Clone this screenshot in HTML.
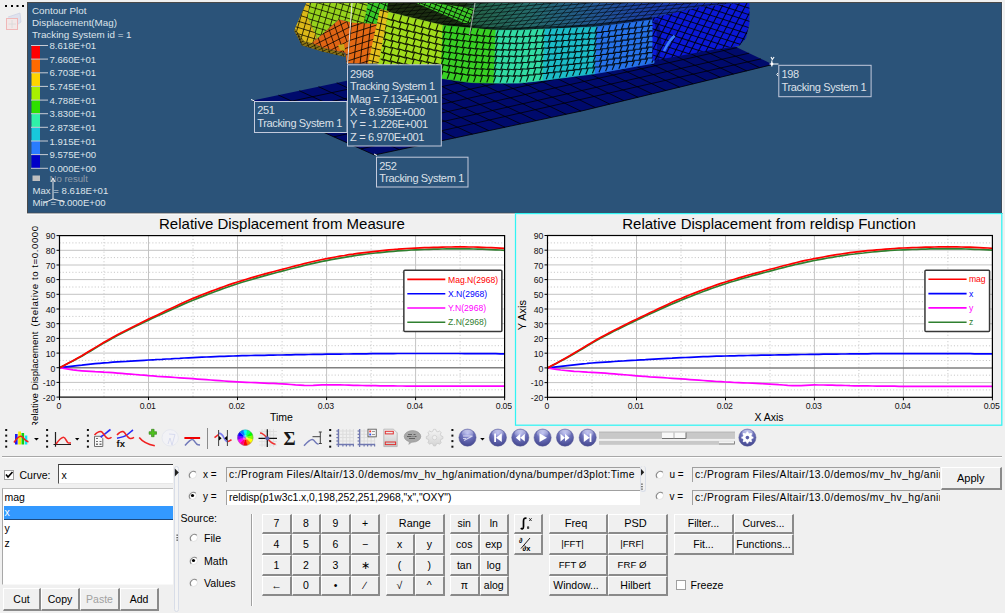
<!DOCTYPE html>
<html><head><meta charset="utf-8"><style>
html,body{margin:0;padding:0}
body{width:1005px;height:613px;position:relative;overflow:hidden;background:#f0f0f0;font-family:'Liberation Sans',sans-serif;}
</style></head><body>
<svg style="position:absolute;left:0;top:0" width="30" height="30"><g fill="#000"><rect x="5" y="5" width="2" height="2"/><rect x="11" y="5" width="2" height="2"/><rect x="16.5" y="5" width="2" height="2"/><rect x="22" y="5" width="2" height="2"/></g>
<path d="M8,17 L20,13 L21,22 L14,27" fill="#dfe2ee" stroke="#c8cce0" stroke-width="0.6"/><rect x="6.5" y="18.5" width="11" height="11" fill="#f2e8e8" stroke="#f0b8b8" stroke-width="1"/><path d="M8.5,24 H16 M12,20 V28" stroke="#d8d8d8" stroke-width="0.8"/></svg>
<div style="position:absolute;left:27px;top:2px;width:975px;height:211px;background:#2b5379;box-shadow:inset 1px 1px 0 #4a4a4a, inset -1px 0 0 #3a4a5a, inset 0 -1px 0 #34506c;overflow:hidden"></div><div style="position:absolute;left:27px;top:213px;width:976px;height:1px;background:#b4b4b4"></div><div style="position:absolute;left:27px;top:214px;width:976px;height:1px;background:#f8f8f8"></div><div style="position:absolute;left:1002px;top:2px;width:1px;height:211px;background:#f8f8f8"></div>
<svg style="position:absolute;left:0;top:0" width="1005" height="213" viewBox="0 0 1005 213">
<defs><clipPath id="vpc"><rect x="28" y="3" width="973" height="210"/></clipPath></defs>
<g clip-path="url(#vpc)">
<polygon points="252.5,100.5 374.4,155.0 582.0,110.9 772.8,64.5 666.0,13.7" fill="#000a6c"/>
<g stroke="#000" stroke-width="0.9" stroke-opacity="0.85">
<line x1="266.0" y1="106.6" x2="677.9" y2="19.3"/>
<line x1="279.6" y1="112.6" x2="689.7" y2="25.0"/>
<line x1="293.1" y1="118.7" x2="701.6" y2="30.6"/>
<line x1="306.7" y1="124.7" x2="713.5" y2="36.3"/>
<line x1="320.2" y1="130.8" x2="725.3" y2="41.9"/>
<line x1="333.8" y1="136.8" x2="737.2" y2="47.6"/>
<line x1="347.3" y1="142.9" x2="749.1" y2="53.2"/>
<line x1="360.9" y1="148.9" x2="760.9" y2="58.9"/>
<line x1="399.4" y1="149.7" x2="278.4" y2="95.1"/>
<line x1="419.4" y1="145.4" x2="299.2" y2="90.7"/>
<line x1="438.0" y1="141.5" x2="318.5" y2="86.7"/>
<line x1="455.6" y1="137.8" x2="336.7" y2="82.8"/>
<line x1="472.5" y1="134.2" x2="354.3" y2="79.1"/>
<line x1="489.0" y1="130.7" x2="371.4" y2="75.5"/>
<line x1="505.0" y1="127.3" x2="388.0" y2="72.0"/>
<line x1="520.7" y1="123.9" x2="404.3" y2="68.6"/>
<line x1="536.1" y1="120.7" x2="420.3" y2="65.3"/>
<line x1="551.2" y1="117.4" x2="436.0" y2="62.0"/>
<line x1="566.2" y1="114.3" x2="451.5" y2="58.7"/>
<line x1="580.9" y1="111.1" x2="466.8" y2="55.5"/>
<line x1="595.4" y1="107.6" x2="481.9" y2="52.3"/>
<line x1="609.8" y1="104.1" x2="496.8" y2="49.2"/>
<line x1="624.0" y1="100.7" x2="511.6" y2="46.1"/>
<line x1="638.1" y1="97.3" x2="526.2" y2="43.0"/>
<line x1="652.0" y1="93.9" x2="540.7" y2="40.0"/>
<line x1="665.9" y1="90.5" x2="555.0" y2="37.0"/>
<line x1="679.6" y1="87.2" x2="569.2" y2="34.0"/>
<line x1="693.2" y1="83.9" x2="583.3" y2="31.1"/>
<line x1="706.7" y1="80.6" x2="597.4" y2="28.1"/>
<line x1="720.1" y1="77.3" x2="611.3" y2="25.2"/>
<line x1="733.4" y1="74.1" x2="625.1" y2="22.3"/>
<line x1="746.6" y1="70.9" x2="638.8" y2="19.4"/>
<line x1="759.7" y1="67.7" x2="652.4" y2="16.5"/>
</g>
<polyline points="252.5,100.5 374.4,155.0 582.0,110.9 772.8,64.5" fill="none" stroke="#000" stroke-width="0.8"/>
<linearGradient id="tg" x1="385" x2="749" y1="0" y2="0" gradientUnits="userSpaceOnUse"><stop offset="0" stop-color="#1c2a0e"/><stop offset="0.22" stop-color="#1a3014"/><stop offset="0.25" stop-color="#246248"/><stop offset="0.4" stop-color="#256a6a"/><stop offset="0.6" stop-color="#215294"/><stop offset="0.74" stop-color="#1a3ca4"/><stop offset="1" stop-color="#0a20b4"/></linearGradient>
<polygon points="385.0,2.0 749.4,2.0 747.0,2.4 700.0,7.0 653.0,18.0 652.0,19.5 596.0,27.0 520.0,30.3 494.0,30.3 443.0,25.5 385.0,11.0" fill="url(#tg)"/>
<clipPath id="mc1"><polygon points="385.0,2.0 749.4,2.0 747.0,2.4 700.0,7.0 653.0,18.0 652.0,19.5 596.0,27.0 520.0,30.3 494.0,30.3 443.0,25.5 385.0,11.0"/></clipPath>
<g clip-path="url(#mc1)" stroke="#000" stroke-opacity="0.62" stroke-width="0.95">
<line x1="166.0" y1="-314.5" x2="890.8" y2="-390.7"/>
<line x1="166.4" y1="-310.9" x2="891.2" y2="-387.1"/>
<line x1="166.8" y1="-307.4" x2="891.6" y2="-383.5"/>
<line x1="167.2" y1="-303.8" x2="892.0" y2="-380.0"/>
<line x1="167.5" y1="-300.2" x2="892.3" y2="-376.4"/>
<line x1="167.9" y1="-296.6" x2="892.7" y2="-372.8"/>
<line x1="168.3" y1="-293.0" x2="893.1" y2="-369.2"/>
<line x1="168.7" y1="-289.5" x2="893.5" y2="-365.6"/>
<line x1="169.0" y1="-285.9" x2="893.9" y2="-362.1"/>
<line x1="169.4" y1="-282.3" x2="894.2" y2="-358.5"/>
<line x1="169.8" y1="-278.7" x2="894.6" y2="-354.9"/>
<line x1="170.2" y1="-275.1" x2="895.0" y2="-351.3"/>
<line x1="170.6" y1="-271.6" x2="895.4" y2="-347.7"/>
<line x1="170.9" y1="-268.0" x2="895.7" y2="-344.2"/>
<line x1="171.3" y1="-264.4" x2="896.1" y2="-340.6"/>
<line x1="171.7" y1="-260.8" x2="896.5" y2="-337.0"/>
<line x1="172.1" y1="-257.2" x2="896.9" y2="-333.4"/>
<line x1="172.4" y1="-253.7" x2="897.2" y2="-329.8"/>
<line x1="172.8" y1="-250.1" x2="897.6" y2="-326.3"/>
<line x1="173.2" y1="-246.5" x2="898.0" y2="-322.7"/>
<line x1="173.6" y1="-242.9" x2="898.4" y2="-319.1"/>
<line x1="173.9" y1="-239.3" x2="898.7" y2="-315.5"/>
<line x1="174.3" y1="-235.8" x2="899.1" y2="-311.9"/>
<line x1="174.7" y1="-232.2" x2="899.5" y2="-308.4"/>
<line x1="175.1" y1="-228.6" x2="899.9" y2="-304.8"/>
<line x1="175.4" y1="-225.0" x2="900.3" y2="-301.2"/>
<line x1="175.8" y1="-221.4" x2="900.6" y2="-297.6"/>
<line x1="176.2" y1="-217.9" x2="901.0" y2="-294.0"/>
<line x1="176.6" y1="-214.3" x2="901.4" y2="-290.5"/>
<line x1="176.9" y1="-210.7" x2="901.8" y2="-286.9"/>
<line x1="177.3" y1="-207.1" x2="902.1" y2="-283.3"/>
<line x1="177.7" y1="-203.5" x2="902.5" y2="-279.7"/>
<line x1="178.1" y1="-200.0" x2="902.9" y2="-276.1"/>
<line x1="178.5" y1="-196.4" x2="903.3" y2="-272.6"/>
<line x1="178.8" y1="-192.8" x2="903.6" y2="-269.0"/>
<line x1="179.2" y1="-189.2" x2="904.0" y2="-265.4"/>
<line x1="179.6" y1="-185.6" x2="904.4" y2="-261.8"/>
<line x1="180.0" y1="-182.1" x2="904.8" y2="-258.2"/>
<line x1="180.3" y1="-178.5" x2="905.1" y2="-254.7"/>
<line x1="180.7" y1="-174.9" x2="905.5" y2="-251.1"/>
<line x1="181.1" y1="-171.3" x2="905.9" y2="-247.5"/>
<line x1="181.5" y1="-167.7" x2="906.3" y2="-243.9"/>
<line x1="181.8" y1="-164.2" x2="906.6" y2="-240.3"/>
<line x1="182.2" y1="-160.6" x2="907.0" y2="-236.8"/>
<line x1="182.6" y1="-157.0" x2="907.4" y2="-233.2"/>
<line x1="183.0" y1="-153.4" x2="907.8" y2="-229.6"/>
<line x1="183.3" y1="-149.8" x2="908.2" y2="-226.0"/>
<line x1="183.7" y1="-146.3" x2="908.5" y2="-222.4"/>
<line x1="184.1" y1="-142.7" x2="908.9" y2="-218.9"/>
<line x1="184.5" y1="-139.1" x2="909.3" y2="-215.3"/>
<line x1="184.9" y1="-135.5" x2="909.7" y2="-211.7"/>
<line x1="185.2" y1="-131.9" x2="910.0" y2="-208.1"/>
<line x1="185.6" y1="-128.4" x2="910.4" y2="-204.5"/>
<line x1="186.0" y1="-124.8" x2="910.8" y2="-201.0"/>
<line x1="186.4" y1="-121.2" x2="911.2" y2="-197.4"/>
<line x1="186.7" y1="-117.6" x2="911.5" y2="-193.8"/>
<line x1="187.1" y1="-114.0" x2="911.9" y2="-190.2"/>
<line x1="187.5" y1="-110.5" x2="912.3" y2="-186.6"/>
<line x1="187.9" y1="-106.9" x2="912.7" y2="-183.1"/>
<line x1="188.2" y1="-103.3" x2="913.0" y2="-179.5"/>
<line x1="188.6" y1="-99.7" x2="913.4" y2="-175.9"/>
<line x1="189.0" y1="-96.1" x2="913.8" y2="-172.3"/>
<line x1="189.4" y1="-92.6" x2="914.2" y2="-168.7"/>
<line x1="189.7" y1="-89.0" x2="914.6" y2="-165.2"/>
<line x1="190.1" y1="-85.4" x2="914.9" y2="-161.6"/>
<line x1="190.5" y1="-81.8" x2="915.3" y2="-158.0"/>
<line x1="190.9" y1="-78.2" x2="915.7" y2="-154.4"/>
<line x1="191.2" y1="-74.6" x2="916.1" y2="-150.8"/>
<line x1="191.6" y1="-71.1" x2="916.4" y2="-147.2"/>
<line x1="192.0" y1="-67.5" x2="916.8" y2="-143.7"/>
<line x1="192.4" y1="-63.9" x2="917.2" y2="-140.1"/>
<line x1="192.8" y1="-60.3" x2="917.6" y2="-136.5"/>
<line x1="193.1" y1="-56.7" x2="917.9" y2="-132.9"/>
<line x1="193.5" y1="-53.2" x2="918.3" y2="-129.3"/>
<line x1="193.9" y1="-49.6" x2="918.7" y2="-125.8"/>
<line x1="194.3" y1="-46.0" x2="919.1" y2="-122.2"/>
<line x1="194.6" y1="-42.4" x2="919.4" y2="-118.6"/>
<line x1="195.0" y1="-38.8" x2="919.8" y2="-115.0"/>
<line x1="195.4" y1="-35.3" x2="920.2" y2="-111.4"/>
<line x1="195.8" y1="-31.7" x2="920.6" y2="-107.9"/>
<line x1="196.1" y1="-28.1" x2="920.9" y2="-104.3"/>
<line x1="196.5" y1="-24.5" x2="921.3" y2="-100.7"/>
<line x1="196.9" y1="-20.9" x2="921.7" y2="-97.1"/>
<line x1="197.3" y1="-17.4" x2="922.1" y2="-93.5"/>
<line x1="197.6" y1="-13.8" x2="922.5" y2="-90.0"/>
<line x1="198.0" y1="-10.2" x2="922.8" y2="-86.4"/>
<line x1="198.4" y1="-6.6" x2="923.2" y2="-82.8"/>
<line x1="198.8" y1="-3.0" x2="923.6" y2="-79.2"/>
<line x1="199.2" y1="0.5" x2="924.0" y2="-75.6"/>
<line x1="199.5" y1="4.1" x2="924.3" y2="-72.1"/>
<line x1="199.9" y1="7.7" x2="924.7" y2="-68.5"/>
<line x1="200.3" y1="11.3" x2="925.1" y2="-64.9"/>
<line x1="200.7" y1="14.9" x2="925.5" y2="-61.3"/>
<line x1="201.0" y1="18.4" x2="925.8" y2="-57.7"/>
<line x1="201.4" y1="22.0" x2="926.2" y2="-54.2"/>
<line x1="201.8" y1="25.6" x2="926.6" y2="-50.6"/>
<line x1="202.2" y1="29.2" x2="927.0" y2="-47.0"/>
<line x1="202.5" y1="32.8" x2="927.3" y2="-43.4"/>
<line x1="202.9" y1="36.3" x2="927.7" y2="-39.8"/>
<line x1="203.3" y1="39.9" x2="928.1" y2="-36.3"/>
<line x1="203.7" y1="43.5" x2="928.5" y2="-32.7"/>
<line x1="204.0" y1="47.1" x2="928.9" y2="-29.1"/>
<line x1="204.4" y1="50.7" x2="929.2" y2="-25.5"/>
<line x1="204.8" y1="54.2" x2="929.6" y2="-21.9"/>
<line x1="205.2" y1="57.8" x2="930.0" y2="-18.4"/>
<line x1="205.5" y1="61.4" x2="930.4" y2="-14.8"/>
<line x1="205.9" y1="65.0" x2="930.7" y2="-11.2"/>
<line x1="206.3" y1="68.6" x2="931.1" y2="-7.6"/>
<line x1="206.7" y1="72.1" x2="931.5" y2="-4.0"/>
<line x1="207.1" y1="75.7" x2="931.9" y2="-0.5"/>
<line x1="207.4" y1="79.3" x2="932.2" y2="3.1"/>
<line x1="207.8" y1="82.9" x2="932.6" y2="6.7"/>
<line x1="208.2" y1="86.5" x2="933.0" y2="10.3"/>
<line x1="208.6" y1="90.0" x2="933.4" y2="13.9"/>
<line x1="208.9" y1="93.6" x2="933.7" y2="17.4"/>
<line x1="209.3" y1="97.2" x2="934.1" y2="21.0"/>
<line x1="209.7" y1="100.8" x2="934.5" y2="24.6"/>
<line x1="210.1" y1="104.4" x2="934.9" y2="28.2"/>
<line x1="210.4" y1="107.9" x2="935.2" y2="31.8"/>
<line x1="210.8" y1="111.5" x2="935.6" y2="35.3"/>
<line x1="211.2" y1="115.1" x2="936.0" y2="38.9"/>
<line x1="211.6" y1="118.7" x2="936.4" y2="42.5"/>
<line x1="211.9" y1="122.3" x2="936.8" y2="46.1"/>
<line x1="212.3" y1="125.8" x2="937.1" y2="49.7"/>
<line x1="212.7" y1="129.4" x2="937.5" y2="53.2"/>
<line x1="213.1" y1="133.0" x2="937.9" y2="56.8"/>
<line x1="213.5" y1="136.6" x2="938.3" y2="60.4"/>
<line x1="213.8" y1="140.2" x2="938.6" y2="64.0"/>
<line x1="214.2" y1="143.7" x2="939.0" y2="67.6"/>
<line x1="214.6" y1="147.3" x2="939.4" y2="71.1"/>
<line x1="215.0" y1="150.9" x2="939.8" y2="74.7"/>
<line x1="215.3" y1="154.5" x2="940.1" y2="78.3"/>
<line x1="215.7" y1="158.1" x2="940.5" y2="81.9"/>
<line x1="216.1" y1="161.6" x2="940.9" y2="85.5"/>
<line x1="216.5" y1="165.2" x2="941.3" y2="89.0"/>
<line x1="216.8" y1="168.8" x2="941.6" y2="92.6"/>
<line x1="217.2" y1="172.4" x2="942.0" y2="96.2"/>
<line x1="217.6" y1="176.0" x2="942.4" y2="99.8"/>
<line x1="218.0" y1="179.5" x2="942.8" y2="103.4"/>
<line x1="218.3" y1="183.1" x2="943.2" y2="106.9"/>
<line x1="218.7" y1="186.7" x2="943.5" y2="110.5"/>
<line x1="219.1" y1="190.3" x2="943.9" y2="114.1"/>
<line x1="219.5" y1="193.9" x2="944.3" y2="117.7"/>
<line x1="219.8" y1="197.5" x2="944.7" y2="121.3"/>
<line x1="220.2" y1="201.0" x2="945.0" y2="124.9"/>
<line x1="220.6" y1="204.6" x2="945.4" y2="128.4"/>
<line x1="221.0" y1="208.2" x2="945.8" y2="132.0"/>
<line x1="221.4" y1="211.8" x2="946.2" y2="135.6"/>
<line x1="221.7" y1="215.4" x2="946.5" y2="139.2"/>
<line x1="222.1" y1="218.9" x2="946.9" y2="142.8"/>
<line x1="222.5" y1="222.5" x2="947.3" y2="146.3"/>
<line x1="222.9" y1="226.1" x2="947.7" y2="149.9"/>
<line x1="223.2" y1="229.7" x2="948.0" y2="153.5"/>
<line x1="223.6" y1="233.3" x2="948.4" y2="157.1"/>
<line x1="224.0" y1="236.8" x2="948.8" y2="160.7"/>
<line x1="224.4" y1="240.4" x2="949.2" y2="164.2"/>
<line x1="224.7" y1="244.0" x2="949.5" y2="167.8"/>
<line x1="225.1" y1="247.6" x2="949.9" y2="171.4"/>
<line x1="225.5" y1="251.2" x2="950.3" y2="175.0"/>
<line x1="225.9" y1="254.7" x2="950.7" y2="178.6"/>
<line x1="226.2" y1="258.3" x2="951.1" y2="182.1"/>
<line x1="226.6" y1="261.9" x2="951.4" y2="185.7"/>
<line x1="227.0" y1="265.5" x2="951.8" y2="189.3"/>
<line x1="227.4" y1="269.1" x2="952.2" y2="192.9"/>
<line x1="227.8" y1="272.6" x2="952.6" y2="196.5"/>
<line x1="228.1" y1="276.2" x2="952.9" y2="200.0"/>
<line x1="228.5" y1="279.8" x2="953.3" y2="203.6"/>
<line x1="228.9" y1="283.4" x2="953.7" y2="207.2"/>
<line x1="229.3" y1="287.0" x2="954.1" y2="210.8"/>
<line x1="229.6" y1="290.5" x2="954.4" y2="214.4"/>
<line x1="230.0" y1="294.1" x2="954.8" y2="217.9"/>
<line x1="230.4" y1="297.7" x2="955.2" y2="221.5"/>
<line x1="230.8" y1="301.3" x2="955.6" y2="225.1"/>
<line x1="231.1" y1="304.9" x2="955.9" y2="228.7"/>
<line x1="231.5" y1="308.4" x2="956.3" y2="232.3"/>
<line x1="231.9" y1="312.0" x2="956.7" y2="235.8"/>
<line x1="232.3" y1="315.6" x2="957.1" y2="239.4"/>
<line x1="232.6" y1="319.2" x2="957.5" y2="243.0"/>
<line x1="233.0" y1="322.8" x2="957.8" y2="246.6"/>
<line x1="233.4" y1="326.3" x2="958.2" y2="250.2"/>
<line x1="233.8" y1="329.9" x2="958.6" y2="253.7"/>
<line x1="234.1" y1="333.5" x2="959.0" y2="257.3"/>
<line x1="234.5" y1="337.1" x2="959.3" y2="260.9"/>
<line x1="234.9" y1="340.7" x2="959.7" y2="264.5"/>
<line x1="235.3" y1="344.2" x2="960.1" y2="268.1"/>
<line x1="235.7" y1="347.8" x2="960.5" y2="271.6"/>
<line x1="236.0" y1="351.4" x2="960.8" y2="275.2"/>
<line x1="236.4" y1="355.0" x2="961.2" y2="278.8"/>
<line x1="236.8" y1="358.6" x2="961.6" y2="282.4"/>
<line x1="237.2" y1="362.1" x2="962.0" y2="286.0"/>
<line x1="237.5" y1="365.7" x2="962.3" y2="289.5"/>
<line x1="237.9" y1="369.3" x2="962.7" y2="293.1"/>
<line x1="238.3" y1="372.9" x2="963.1" y2="296.7"/>
<line x1="238.7" y1="376.5" x2="963.5" y2="300.3"/>
<line x1="239.0" y1="380.0" x2="963.8" y2="303.9"/>
<line x1="239.4" y1="383.6" x2="964.2" y2="307.4"/>
<line x1="239.8" y1="387.2" x2="964.6" y2="311.0"/>
<line x1="240.2" y1="390.8" x2="965.0" y2="314.6"/>
<line x1="240.5" y1="394.4" x2="965.4" y2="318.2"/>
<line x1="240.9" y1="397.9" x2="965.7" y2="321.8"/>
<line x1="241.3" y1="401.5" x2="966.1" y2="325.3"/>
<line x1="241.7" y1="405.1" x2="966.5" y2="328.9"/>
<line x1="242.1" y1="408.7" x2="966.9" y2="332.5"/>
<line x1="242.4" y1="412.3" x2="967.2" y2="336.1"/>
<line x1="242.8" y1="415.8" x2="967.6" y2="339.7"/>
<line x1="243.2" y1="419.4" x2="968.0" y2="343.2"/>
<line x1="243.6" y1="423.0" x2="968.4" y2="346.8"/>
<line x1="45.1" y1="36.4" x2="532.8" y2="-505.2"/>
<line x1="49.0" y1="39.9" x2="536.7" y2="-501.7"/>
<line x1="52.9" y1="43.4" x2="540.5" y2="-498.2"/>
<line x1="56.7" y1="46.9" x2="544.4" y2="-494.7"/>
<line x1="60.6" y1="50.3" x2="548.3" y2="-491.3"/>
<line x1="64.5" y1="53.8" x2="552.1" y2="-487.8"/>
<line x1="68.3" y1="57.3" x2="556.0" y2="-484.3"/>
<line x1="72.2" y1="60.8" x2="559.8" y2="-480.8"/>
<line x1="76.1" y1="64.3" x2="563.7" y2="-477.3"/>
<line x1="79.9" y1="67.7" x2="567.6" y2="-473.9"/>
<line x1="83.8" y1="71.2" x2="571.4" y2="-470.4"/>
<line x1="87.6" y1="74.7" x2="575.3" y2="-466.9"/>
<line x1="91.5" y1="78.2" x2="579.2" y2="-463.4"/>
<line x1="95.4" y1="81.7" x2="583.0" y2="-459.9"/>
<line x1="99.2" y1="85.1" x2="586.9" y2="-456.5"/>
<line x1="103.1" y1="88.6" x2="590.8" y2="-453.0"/>
<line x1="107.0" y1="92.1" x2="594.6" y2="-449.5"/>
<line x1="110.8" y1="95.6" x2="598.5" y2="-446.0"/>
<line x1="114.7" y1="99.1" x2="602.4" y2="-442.5"/>
<line x1="118.6" y1="102.5" x2="606.2" y2="-439.1"/>
<line x1="122.4" y1="106.0" x2="610.1" y2="-435.6"/>
<line x1="126.3" y1="109.5" x2="613.9" y2="-432.1"/>
<line x1="130.2" y1="113.0" x2="617.8" y2="-428.6"/>
<line x1="134.0" y1="116.5" x2="621.7" y2="-425.1"/>
<line x1="137.9" y1="119.9" x2="625.5" y2="-421.7"/>
<line x1="141.7" y1="123.4" x2="629.4" y2="-418.2"/>
<line x1="145.6" y1="126.9" x2="633.3" y2="-414.7"/>
<line x1="149.5" y1="130.4" x2="637.1" y2="-411.2"/>
<line x1="153.3" y1="133.9" x2="641.0" y2="-407.7"/>
<line x1="157.2" y1="137.3" x2="644.9" y2="-404.3"/>
<line x1="161.1" y1="140.8" x2="648.7" y2="-400.8"/>
<line x1="164.9" y1="144.3" x2="652.6" y2="-397.3"/>
<line x1="168.8" y1="147.8" x2="656.5" y2="-393.8"/>
<line x1="172.7" y1="151.3" x2="660.3" y2="-390.4"/>
<line x1="176.5" y1="154.7" x2="664.2" y2="-386.9"/>
<line x1="180.4" y1="158.2" x2="668.1" y2="-383.4"/>
<line x1="184.3" y1="161.7" x2="671.9" y2="-379.9"/>
<line x1="188.1" y1="165.2" x2="675.8" y2="-376.4"/>
<line x1="192.0" y1="168.6" x2="679.6" y2="-373.0"/>
<line x1="195.8" y1="172.1" x2="683.5" y2="-369.5"/>
<line x1="199.7" y1="175.6" x2="687.4" y2="-366.0"/>
<line x1="203.6" y1="179.1" x2="691.2" y2="-362.5"/>
<line x1="207.4" y1="182.6" x2="695.1" y2="-359.0"/>
<line x1="211.3" y1="186.0" x2="699.0" y2="-355.6"/>
<line x1="215.2" y1="189.5" x2="702.8" y2="-352.1"/>
<line x1="219.0" y1="193.0" x2="706.7" y2="-348.6"/>
<line x1="222.9" y1="196.5" x2="710.6" y2="-345.1"/>
<line x1="226.8" y1="200.0" x2="714.4" y2="-341.6"/>
<line x1="230.6" y1="203.4" x2="718.3" y2="-338.2"/>
<line x1="234.5" y1="206.9" x2="722.2" y2="-334.7"/>
<line x1="238.4" y1="210.4" x2="726.0" y2="-331.2"/>
<line x1="242.2" y1="213.9" x2="729.9" y2="-327.7"/>
<line x1="246.1" y1="217.4" x2="733.7" y2="-324.2"/>
<line x1="249.9" y1="220.8" x2="737.6" y2="-320.8"/>
<line x1="253.8" y1="224.3" x2="741.5" y2="-317.3"/>
<line x1="257.7" y1="227.8" x2="745.3" y2="-313.8"/>
<line x1="261.5" y1="231.3" x2="749.2" y2="-310.3"/>
<line x1="265.4" y1="234.8" x2="753.1" y2="-306.8"/>
<line x1="269.3" y1="238.2" x2="756.9" y2="-303.4"/>
<line x1="273.1" y1="241.7" x2="760.8" y2="-299.9"/>
<line x1="277.0" y1="245.2" x2="764.7" y2="-296.4"/>
<line x1="280.9" y1="248.7" x2="768.5" y2="-292.9"/>
<line x1="284.7" y1="252.2" x2="772.4" y2="-289.4"/>
<line x1="288.6" y1="255.6" x2="776.3" y2="-286.0"/>
<line x1="292.5" y1="259.1" x2="780.1" y2="-282.5"/>
<line x1="296.3" y1="262.6" x2="784.0" y2="-279.0"/>
<line x1="300.2" y1="266.1" x2="787.8" y2="-275.5"/>
<line x1="304.0" y1="269.6" x2="791.7" y2="-272.0"/>
<line x1="307.9" y1="273.0" x2="795.6" y2="-268.6"/>
<line x1="311.8" y1="276.5" x2="799.4" y2="-265.1"/>
<line x1="315.6" y1="280.0" x2="803.3" y2="-261.6"/>
<line x1="319.5" y1="283.5" x2="807.2" y2="-258.1"/>
<line x1="323.4" y1="287.0" x2="811.0" y2="-254.7"/>
<line x1="327.2" y1="290.4" x2="814.9" y2="-251.2"/>
<line x1="331.1" y1="293.9" x2="818.8" y2="-247.7"/>
<line x1="335.0" y1="297.4" x2="822.6" y2="-244.2"/>
<line x1="338.8" y1="300.9" x2="826.5" y2="-240.7"/>
<line x1="342.7" y1="304.3" x2="830.4" y2="-237.3"/>
<line x1="346.6" y1="307.8" x2="834.2" y2="-233.8"/>
<line x1="350.4" y1="311.3" x2="838.1" y2="-230.3"/>
<line x1="354.3" y1="314.8" x2="841.9" y2="-226.8"/>
<line x1="358.1" y1="318.3" x2="845.8" y2="-223.3"/>
<line x1="362.0" y1="321.7" x2="849.7" y2="-219.9"/>
<line x1="365.9" y1="325.2" x2="853.5" y2="-216.4"/>
<line x1="369.7" y1="328.7" x2="857.4" y2="-212.9"/>
<line x1="373.6" y1="332.2" x2="861.3" y2="-209.4"/>
<line x1="377.5" y1="335.7" x2="865.1" y2="-205.9"/>
<line x1="381.3" y1="339.1" x2="869.0" y2="-202.5"/>
<line x1="385.2" y1="342.6" x2="872.9" y2="-199.0"/>
<line x1="389.1" y1="346.1" x2="876.7" y2="-195.5"/>
<line x1="392.9" y1="349.6" x2="880.6" y2="-192.0"/>
<line x1="396.8" y1="353.1" x2="884.5" y2="-188.5"/>
<line x1="400.7" y1="356.5" x2="888.3" y2="-185.1"/>
<line x1="404.5" y1="360.0" x2="892.2" y2="-181.6"/>
<line x1="408.4" y1="363.5" x2="896.0" y2="-178.1"/>
<line x1="412.2" y1="367.0" x2="899.9" y2="-174.6"/>
<line x1="416.1" y1="370.5" x2="903.8" y2="-171.1"/>
<line x1="420.0" y1="373.9" x2="907.6" y2="-167.7"/>
<line x1="423.8" y1="377.4" x2="911.5" y2="-164.2"/>
<line x1="427.7" y1="380.9" x2="915.4" y2="-160.7"/>
<line x1="431.6" y1="384.4" x2="919.2" y2="-157.2"/>
<line x1="435.4" y1="387.9" x2="923.1" y2="-153.7"/>
<line x1="439.3" y1="391.3" x2="927.0" y2="-150.3"/>
<line x1="443.2" y1="394.8" x2="930.8" y2="-146.8"/>
<line x1="447.0" y1="398.3" x2="934.7" y2="-143.3"/>
<line x1="450.9" y1="401.8" x2="938.6" y2="-139.8"/>
<line x1="454.8" y1="405.3" x2="942.4" y2="-136.3"/>
<line x1="458.6" y1="408.7" x2="946.3" y2="-132.9"/>
<line x1="462.5" y1="412.2" x2="950.1" y2="-129.4"/>
<line x1="466.3" y1="415.7" x2="954.0" y2="-125.9"/>
<line x1="470.2" y1="419.2" x2="957.9" y2="-122.4"/>
<line x1="474.1" y1="422.7" x2="961.7" y2="-119.0"/>
<line x1="477.9" y1="426.1" x2="965.6" y2="-115.5"/>
<line x1="481.8" y1="429.6" x2="969.5" y2="-112.0"/>
<line x1="485.7" y1="433.1" x2="973.3" y2="-108.5"/>
<line x1="489.5" y1="436.6" x2="977.2" y2="-105.0"/>
<line x1="493.4" y1="440.0" x2="981.1" y2="-101.6"/>
<line x1="497.3" y1="443.5" x2="984.9" y2="-98.1"/>
<line x1="501.1" y1="447.0" x2="988.8" y2="-94.6"/>
<line x1="505.0" y1="450.5" x2="992.7" y2="-91.1"/>
<line x1="508.9" y1="454.0" x2="996.5" y2="-87.6"/>
<line x1="512.7" y1="457.4" x2="1000.4" y2="-84.2"/>
<line x1="516.6" y1="460.9" x2="1004.2" y2="-80.7"/>
<line x1="520.5" y1="464.4" x2="1008.1" y2="-77.2"/>
<line x1="524.3" y1="467.9" x2="1012.0" y2="-73.7"/>
<line x1="528.2" y1="471.4" x2="1015.8" y2="-70.2"/>
<line x1="532.0" y1="474.8" x2="1019.7" y2="-66.8"/>
<line x1="535.9" y1="478.3" x2="1023.6" y2="-63.3"/>
<line x1="539.8" y1="481.8" x2="1027.4" y2="-59.8"/>
<line x1="543.6" y1="485.3" x2="1031.3" y2="-56.3"/>
<line x1="547.5" y1="488.8" x2="1035.2" y2="-52.8"/>
<line x1="551.4" y1="492.2" x2="1039.0" y2="-49.4"/>
<line x1="555.2" y1="495.7" x2="1042.9" y2="-45.9"/>
<line x1="559.1" y1="499.2" x2="1046.8" y2="-42.4"/>
<line x1="563.0" y1="502.7" x2="1050.6" y2="-38.9"/>
<line x1="566.8" y1="506.2" x2="1054.5" y2="-35.4"/>
<line x1="570.7" y1="509.6" x2="1058.3" y2="-32.0"/>
<line x1="574.6" y1="513.1" x2="1062.2" y2="-28.5"/>
<line x1="578.4" y1="516.6" x2="1066.1" y2="-25.0"/>
<line x1="582.3" y1="520.1" x2="1069.9" y2="-21.5"/>
<line x1="586.1" y1="523.6" x2="1073.8" y2="-18.0"/>
<line x1="590.0" y1="527.0" x2="1077.7" y2="-14.6"/>
<line x1="593.9" y1="530.5" x2="1081.5" y2="-11.1"/>
<line x1="597.7" y1="534.0" x2="1085.4" y2="-7.6"/>
<line x1="601.6" y1="537.5" x2="1089.3" y2="-4.1"/>
</g>
<polyline points="443,24.5 494,29 520,29 596,25.8 652,18.5" fill="none" stroke="#000" stroke-opacity="0.55" stroke-width="3"/>
<polygon points="414.0,2.0 426.0,2.0 474.0,8.5 470.0,23.0 464.0,23.0" fill="#3cc828"/><clipPath id="mc2"><polygon points="414.0,2.0 426.0,2.0 474.0,8.5 470.0,23.0 464.0,23.0"/></clipPath>
<g clip-path="url(#mc2)" stroke="#000" stroke-opacity="0.85" stroke-width="1.0">
<line x1="413.5" y1="-72.3" x2="524.8" y2="-27.3"/>
<line x1="412.0" y1="-68.4" x2="523.2" y2="-23.4"/>
<line x1="410.4" y1="-64.5" x2="521.7" y2="-19.5"/>
<line x1="408.8" y1="-60.6" x2="520.1" y2="-15.6"/>
<line x1="407.2" y1="-56.7" x2="518.5" y2="-11.8"/>
<line x1="405.7" y1="-52.8" x2="516.9" y2="-7.9"/>
<line x1="404.1" y1="-48.9" x2="515.4" y2="-4.0"/>
<line x1="402.5" y1="-45.0" x2="513.8" y2="-0.1"/>
<line x1="401.0" y1="-41.1" x2="512.2" y2="3.8"/>
<line x1="399.4" y1="-37.2" x2="510.6" y2="7.7"/>
<line x1="397.8" y1="-33.3" x2="509.1" y2="11.6"/>
<line x1="396.2" y1="-29.4" x2="507.5" y2="15.5"/>
<line x1="394.7" y1="-25.6" x2="505.9" y2="19.4"/>
<line x1="393.1" y1="-21.7" x2="504.4" y2="23.3"/>
<line x1="391.5" y1="-17.8" x2="502.8" y2="27.2"/>
<line x1="389.9" y1="-13.9" x2="501.2" y2="31.1"/>
<line x1="388.4" y1="-10.0" x2="499.6" y2="35.0"/>
<line x1="386.8" y1="-6.1" x2="498.1" y2="38.9"/>
<line x1="385.2" y1="-2.2" x2="496.5" y2="42.8"/>
<line x1="383.6" y1="1.7" x2="494.9" y2="46.7"/>
<line x1="382.1" y1="5.6" x2="493.3" y2="50.6"/>
<line x1="380.5" y1="9.5" x2="491.8" y2="54.4"/>
<line x1="378.9" y1="13.4" x2="490.2" y2="58.3"/>
<line x1="377.4" y1="17.3" x2="488.6" y2="62.2"/>
<line x1="375.8" y1="21.2" x2="487.0" y2="66.1"/>
<line x1="374.2" y1="25.1" x2="485.5" y2="70.0"/>
<line x1="372.6" y1="29.0" x2="483.9" y2="73.9"/>
<line x1="371.1" y1="32.9" x2="482.3" y2="77.8"/>
<line x1="369.5" y1="36.8" x2="480.8" y2="81.7"/>
<line x1="367.9" y1="40.6" x2="479.2" y2="85.6"/>
<line x1="366.3" y1="44.5" x2="477.6" y2="89.5"/>
<line x1="364.8" y1="48.4" x2="476.0" y2="93.4"/>
<line x1="363.2" y1="52.3" x2="474.5" y2="97.3"/>
<line x1="357.4" y1="38.3" x2="408.1" y2="-70.4"/>
<line x1="362.1" y1="40.5" x2="412.8" y2="-68.2"/>
<line x1="366.8" y1="42.7" x2="417.5" y2="-66.1"/>
<line x1="371.5" y1="44.9" x2="422.2" y2="-63.9"/>
<line x1="376.2" y1="47.1" x2="426.9" y2="-61.7"/>
<line x1="380.9" y1="49.3" x2="431.7" y2="-59.5"/>
<line x1="385.7" y1="51.5" x2="436.4" y2="-57.3"/>
<line x1="390.4" y1="53.7" x2="441.1" y2="-55.1"/>
<line x1="395.1" y1="55.9" x2="445.8" y2="-52.9"/>
<line x1="399.8" y1="58.1" x2="450.5" y2="-50.7"/>
<line x1="404.5" y1="60.3" x2="455.2" y2="-48.5"/>
<line x1="409.2" y1="62.5" x2="459.9" y2="-46.3"/>
<line x1="413.9" y1="64.7" x2="464.6" y2="-44.1"/>
<line x1="418.6" y1="66.9" x2="469.4" y2="-41.9"/>
<line x1="423.4" y1="69.1" x2="474.1" y2="-39.7"/>
<line x1="428.1" y1="71.3" x2="478.8" y2="-37.5"/>
<line x1="432.8" y1="73.5" x2="483.5" y2="-35.3"/>
<line x1="437.5" y1="75.7" x2="488.2" y2="-33.1"/>
<line x1="442.2" y1="77.9" x2="492.9" y2="-30.9"/>
<line x1="446.9" y1="80.1" x2="497.6" y2="-28.7"/>
<line x1="451.6" y1="82.3" x2="502.3" y2="-26.5"/>
<line x1="456.3" y1="84.5" x2="507.1" y2="-24.3"/>
<line x1="461.1" y1="86.7" x2="511.8" y2="-22.1"/>
<line x1="465.8" y1="88.9" x2="516.5" y2="-19.9"/>
<line x1="470.5" y1="91.1" x2="521.2" y2="-17.7"/>
<line x1="475.2" y1="93.2" x2="525.9" y2="-15.5"/>
<line x1="479.9" y1="95.4" x2="530.6" y2="-13.3"/>
</g>
<polygon points="380.0,11.0 386.3,11.8 392.6,13.3 398.9,14.8 405.2,16.4 411.5,17.9 417.8,19.4 424.1,20.9 430.4,22.5 436.7,24.0 443.0,25.5 441.0,78.2 434.7,77.2 428.4,76.3 422.1,75.0 415.8,73.8 409.5,72.5 403.2,71.3 396.9,70.0 390.6,68.8 384.3,67.5 378.0,66.2" fill="#a0dc1c" stroke="#a0dc1c" stroke-width="0.8"/>
<polygon points="443.0,25.5 448.3,26.0 453.6,26.5 458.9,27.0 464.2,27.5 469.5,28.0 474.8,28.5 480.1,29.0 485.4,29.5 490.7,30.0 496.0,30.3 494.0,83.0 488.7,82.9 483.4,82.8 478.1,82.7 472.8,82.6 467.5,82.1 462.2,81.3 456.9,80.6 451.6,79.8 446.3,79.0 441.0,78.2" fill="#38d024" stroke="#38d024" stroke-width="0.8"/>
<polygon points="496.0,30.3 500.9,30.3 505.8,30.3 510.7,30.3 515.6,30.3 520.5,30.3 525.4,30.1 530.3,29.9 535.2,29.6 540.1,29.4 545.0,29.2 543.0,80.3 538.1,80.9 533.2,81.5 528.3,82.0 523.4,82.6 518.5,83.0 513.6,83.0 508.7,83.1 503.8,83.1 498.9,83.1 494.0,83.0" fill="#32dca4" stroke="#32dca4" stroke-width="0.8"/>
<polygon points="545.0,29.2 550.2,29.0 555.4,28.8 560.6,28.5 565.8,28.3 571.0,28.1 576.2,27.9 581.4,27.6 586.6,27.4 591.8,27.2 597.0,26.9 595.0,73.6 589.8,74.3 584.6,75.0 579.4,75.6 574.2,76.3 569.0,77.0 563.8,77.7 558.6,78.3 553.4,79.0 548.2,79.7 543.0,80.3" fill="#1cbcc8" stroke="#1cbcc8" stroke-width="0.8"/>
<polygon points="597.0,26.9 602.9,26.1 608.8,25.4 614.7,24.7 620.6,23.9 626.5,23.2 632.4,22.5 638.3,21.7 644.2,21.0 650.1,20.2 656.0,19.5 654.0,63.1 648.1,64.1 642.2,65.2 636.3,66.2 630.4,67.3 624.5,68.4 618.6,69.4 612.7,70.5 606.8,71.6 600.9,72.6 595.0,73.6" fill="#2672e8" stroke="#2672e8" stroke-width="0.8"/>
<path d="M387.0,11.7L384.6,18.6M386.6,18.6L384.3,25.5M386.3,25.5L383.9,32.4M385.9,32.4L383.6,39.3M385.6,39.3L383.2,46.2M385.2,46.2L382.9,53.1M384.9,53.1L382.6,59.9M384.6,59.9L382.2,66.8M394.3,13.5L391.9,20.3M393.9,20.3L391.6,27.2M393.6,27.2L391.2,34.0M393.2,34.0L390.9,40.9M392.9,40.9L390.6,47.7M392.6,47.7L390.2,54.6M392.2,54.6L389.9,61.4M391.9,61.4L389.5,68.3M401.6,15.3L399.2,22.1M401.2,22.1L398.9,28.9M400.9,28.9L398.6,35.7M400.6,35.7L398.2,42.5M400.2,42.5L397.9,49.3M399.9,49.3L397.5,56.1M399.5,56.1L397.2,62.9M399.2,62.9L396.8,69.7M408.9,17.0L406.6,23.8M408.6,23.8L406.2,30.6M408.2,30.6L405.9,37.3M407.9,37.3L405.5,44.1M407.5,44.1L405.2,50.9M407.2,50.9L404.8,57.6M406.8,57.6L404.5,64.4M406.5,64.4L404.1,71.2M416.2,18.8L413.9,25.5M415.9,25.5L413.5,32.2M415.5,32.2L413.2,39.0M415.2,39.0L412.8,45.7M414.8,45.7L412.5,52.4M414.5,52.4L412.1,59.2M414.1,59.2L411.8,65.9M413.8,65.9L411.4,72.6M423.5,20.5L421.2,27.2M423.2,27.2L420.8,33.9M422.8,33.9L420.5,40.6M422.5,40.6L420.1,47.3M422.1,47.3L419.8,54.0M421.8,54.0L419.4,60.7M421.4,60.7L419.1,67.4M421.1,67.4L418.7,74.1M430.8,22.3L428.5,29.0M430.5,29.0L428.1,35.6M430.1,35.6L427.8,42.3M429.8,42.3L427.4,48.9M429.4,48.9L427.1,55.6M429.1,55.6L426.7,62.2M428.7,62.2L426.4,68.9M428.4,68.9L426.0,75.5M438.1,24.1L435.8,30.7M437.8,30.7L435.4,37.2M437.4,37.2L435.1,43.8M437.1,43.8L434.7,50.4M436.7,50.4L434.4,57.0M436.4,57.0L434.0,63.5M436.0,63.5L433.7,70.1M435.7,70.1L433.3,76.7M445.4,25.6L443.1,32.1M445.1,32.1L442.7,38.7M444.7,38.7L442.4,45.2M444.4,45.2L442.0,51.7M444.0,51.7L441.7,58.2M443.7,58.2L441.3,64.7M443.3,64.7L441.0,71.3M443.0,71.3L440.6,77.8M452.0,26.3L449.7,32.8M451.7,32.8L449.3,39.4M451.3,39.4L449.0,45.9M451.0,45.9L448.6,52.5M450.6,52.5L448.3,59.1M450.3,59.1L447.9,65.6M449.9,65.6L447.6,72.2M449.6,72.2L447.2,78.8M458.6,26.9L456.3,33.5M458.3,33.5L455.9,40.1M457.9,40.1L455.6,46.7M457.6,46.7L455.2,53.3M457.2,53.3L454.9,59.9M456.9,59.9L454.5,66.5M456.5,66.5L454.2,73.1M456.2,73.1L453.8,79.7M465.2,27.5L462.9,34.1M464.9,34.1L462.5,40.8M464.5,40.8L462.2,47.5M464.2,47.5L461.8,54.1M463.8,54.1L461.5,60.8M463.5,60.8L461.1,67.4M463.1,67.4L460.8,74.1M462.8,74.1L460.4,80.7M471.8,28.1L469.5,34.8M471.5,34.8L469.1,41.5M471.1,41.5L468.8,48.2M470.8,48.2L468.4,54.9M470.4,54.9L468.1,61.6M470.1,61.6L467.7,68.3M469.7,68.3L467.4,75.0M469.4,75.0L467.0,81.7M478.4,28.7L476.1,35.4M478.1,35.4L475.7,42.1M477.7,42.1L475.4,48.7M477.4,48.7L475.0,55.4M477.0,55.4L474.7,62.1M476.7,62.1L474.3,68.8M476.3,68.8L474.0,75.4M476.0,75.4L473.6,82.1M485.0,29.4L482.7,36.0M484.7,36.0L482.3,42.6M484.3,42.6L482.0,49.2M484.0,49.2L481.6,55.8M483.6,55.8L481.3,62.4M483.3,62.4L480.9,69.0M482.9,69.0L480.6,75.6M482.6,75.6L480.2,82.2M491.6,30.0L489.3,36.5M491.3,36.5L488.9,43.1M490.9,43.1L488.6,49.6M490.6,49.6L488.2,56.2M490.2,56.2L487.9,62.7M489.9,62.7L487.5,69.3M489.5,69.3L487.2,75.8M489.2,75.8L486.8,82.4M498.2,30.3L495.9,36.8M497.9,36.8L495.5,43.3M497.5,43.3L495.2,49.9M497.2,49.9L494.8,56.4M496.8,56.4L494.5,62.9M496.5,62.9L494.1,69.4M496.1,69.4L493.8,76.0M495.8,76.0L493.4,82.5M504.8,30.3L502.5,36.8M504.5,36.8L502.1,43.4M504.1,43.4L501.8,49.9M503.8,49.9L501.4,56.4M503.4,56.4L501.1,63.0M503.1,63.0L500.7,69.5M502.7,69.5L500.4,76.1M502.4,76.1L500.0,82.6M511.4,30.3L509.1,36.8M511.1,36.8L508.7,43.4M510.7,43.4L508.4,49.9M510.4,49.9L508.0,56.4M510.0,56.4L507.7,63.0M509.7,63.0L507.3,69.5M509.3,69.5L507.0,76.0M509.0,76.0L506.6,82.6M518.0,30.3L515.7,36.8M517.7,36.8L515.3,43.4M517.3,43.4L515.0,49.9M517.0,49.9L514.6,56.4M516.6,56.4L514.3,62.9M516.3,62.9L513.9,69.5M515.9,69.5L513.6,76.0M515.6,76.0L513.2,82.5M524.6,30.1L522.3,36.7M524.3,36.7L521.9,43.2M523.9,43.2L521.6,49.7M523.6,49.7L521.2,56.3M523.2,56.3L520.9,62.8M522.9,62.8L520.5,69.3M522.5,69.3L520.2,75.9M522.2,75.9L519.8,82.4M531.2,29.9L528.9,36.3M530.9,36.3L528.5,42.8M530.5,42.8L528.2,49.3M530.2,49.3L527.8,55.7M529.8,55.7L527.5,62.2M529.5,62.2L527.1,68.7M529.1,68.7L526.8,75.2M528.8,75.2L526.4,81.6M537.8,29.6L535.5,36.0M537.5,36.0L535.1,42.4M537.1,42.4L534.8,48.8M536.8,48.8L534.4,55.2M536.4,55.2L534.1,61.6M536.1,61.6L533.7,68.0M535.7,68.0L533.4,74.5M535.4,74.5L533.0,80.9M544.4,29.3L542.1,35.6M544.1,35.6L541.7,42.0M543.7,42.0L541.4,48.3M543.4,48.3L541.0,54.7M543.0,54.7L540.7,61.1M542.7,61.1L540.3,67.4M542.3,67.4L540.0,73.8M542.0,73.8L539.6,80.1M551.0,29.0L548.7,35.3M550.7,35.3L548.3,41.6M550.3,41.6L548.0,47.9M550.0,47.9L547.6,54.2M549.6,54.2L547.3,60.4M549.3,60.4L546.9,66.7M548.9,66.7L546.6,73.0M548.6,73.0L546.2,79.3M557.6,28.7L555.3,34.9M557.3,34.9L554.9,41.1M556.9,41.1L554.6,47.4M556.6,47.4L554.2,53.6M556.2,53.6L553.9,59.8M555.9,59.8L553.5,66.0M555.5,66.0L553.2,72.2M555.2,72.2L552.8,78.5M564.2,28.4L561.9,34.6M563.9,34.6L561.5,40.7M563.5,40.7L561.2,46.9M563.2,46.9L560.8,53.0M562.8,53.0L560.5,59.2M562.5,59.2L560.1,65.3M562.1,65.3L559.8,71.5M561.8,71.5L559.4,77.6M570.8,28.1L568.5,34.2M570.5,34.2L568.1,40.3M570.1,40.3L567.8,46.4M569.8,46.4L567.4,52.4M569.4,52.4L567.1,58.5M569.1,58.5L566.7,64.6M568.7,64.6L566.4,70.7M568.4,70.7L566.0,76.8M577.4,27.9L575.1,33.9M577.1,33.9L574.7,39.9M576.7,39.9L574.4,45.9M576.4,45.9L574.0,51.9M576.0,51.9L573.7,57.9M575.7,57.9L573.3,63.9M575.3,63.9L573.0,69.9M575.0,69.9L572.6,75.9M584.0,27.6L581.7,33.5M583.7,33.5L581.3,39.4M583.3,39.4L581.0,45.4M583.0,45.4L580.6,51.3M582.6,51.3L580.3,57.2M582.3,57.2L579.9,63.2M581.9,63.2L579.6,69.1M581.6,69.1L579.2,75.0M590.6,27.3L588.3,33.1M590.3,33.1L587.9,39.0M589.9,39.0L587.6,44.9M589.6,44.9L587.2,50.7M589.2,50.7L586.9,56.6M588.9,56.6L586.5,62.5M588.5,62.5L586.2,68.3M588.2,68.3L585.8,74.2M597.2,27.0L594.9,32.8M596.9,32.8L594.5,38.6M596.5,38.6L594.2,44.4M596.2,44.4L593.8,50.2M595.8,50.2L593.5,56.0M595.5,56.0L593.1,61.7M595.1,61.7L592.8,67.5M594.8,67.5L592.4,73.3M603.8,26.1L601.5,31.9M603.5,31.9L601.1,37.7M603.1,37.7L600.8,43.4M602.8,43.4L600.4,49.2M602.4,49.2L600.1,55.0M602.1,55.0L599.7,60.7M601.7,60.7L599.4,66.5M601.4,66.5L599.0,72.3M610.4,25.3L608.1,31.0M610.1,31.0L607.7,36.8M609.7,36.8L607.4,42.5M609.4,42.5L607.0,48.2M609.0,48.2L606.7,53.9M608.7,53.9L606.3,59.7M608.3,59.7L606.0,65.4M608.0,65.4L605.6,71.1M617.0,24.5L614.7,30.2M616.7,30.2L614.3,35.9M616.3,35.9L614.0,41.5M616.0,41.5L613.6,47.2M615.6,47.2L613.3,52.9M615.3,52.9L612.9,58.6M614.9,58.6L612.6,64.2M614.6,64.2L612.2,69.9M623.6,23.7L621.3,29.3M623.3,29.3L620.9,34.9M622.9,34.9L620.6,40.6M622.6,40.6L620.2,46.2M622.2,46.2L619.9,51.8M621.9,51.8L619.5,57.5M621.5,57.5L619.2,63.1M621.2,63.1L618.8,68.7M630.2,22.8L627.9,28.4M629.9,28.4L627.5,34.0M629.5,34.0L627.2,39.6M629.2,39.6L626.8,45.2M628.8,45.2L626.5,50.8M628.5,50.8L626.1,56.4M628.1,56.4L625.8,61.9M627.8,61.9L625.4,67.5M636.8,22.0L634.5,27.6M636.5,27.6L634.1,33.1M636.1,33.1L633.8,38.6M635.8,38.6L633.4,44.2M635.4,44.2L633.1,49.7M635.1,49.7L632.7,55.3M634.7,55.3L632.4,60.8M634.4,60.8L632.0,66.3M643.4,21.2L641.1,26.7M643.1,26.7L640.7,32.2M642.7,32.2L640.4,37.7M642.4,37.7L640.0,43.2M642.0,43.2L639.7,48.7M641.7,48.7L639.3,54.2M641.3,54.2L639.0,59.7M641.0,59.7L638.6,65.2M650.0,20.4L647.7,25.8M649.7,25.8L647.3,31.3M649.3,31.3L647.0,36.7M649.0,36.7L646.6,42.2M648.6,42.2L646.3,47.6M648.3,47.6L645.9,53.1M647.9,53.1L645.6,58.5M647.6,58.5L645.2,64.0M656.6,19.5L654.3,25.0M656.3,25.0L653.9,30.4M655.9,30.4L653.6,35.8M655.6,35.8L653.2,41.2M655.2,41.2L652.9,46.6M654.9,46.6L652.5,52.0M654.5,52.0L652.2,57.4M654.2,57.4L651.8,62.8M382.6,17.4L385.6,19.1M385.6,18.1L392.9,20.8M392.9,19.8L400.2,22.6M400.2,21.6L407.6,24.3M407.6,23.3L414.9,26.0M414.9,25.0L422.2,27.7M422.2,26.7L429.5,29.5M429.5,28.5L436.8,31.2M436.8,30.2L444.1,32.6M444.1,31.6L450.7,33.3M450.7,32.3L457.3,34.0M457.3,33.0L463.9,34.6M463.9,33.6L470.5,35.3M470.5,34.3L477.1,35.9M477.1,34.9L483.7,36.5M483.7,35.5L490.3,37.0M490.3,36.0L496.9,37.3M496.9,36.3L503.5,37.3M503.5,36.3L510.1,37.3M510.1,36.3L516.7,37.3M516.7,36.3L523.3,37.2M523.3,36.2L529.9,36.8M529.9,35.8L536.5,36.5M536.5,35.5L543.1,36.1M543.1,35.1L549.7,35.8M549.7,34.8L556.3,35.4M556.3,34.4L562.9,35.1M562.9,34.1L569.5,34.7M569.5,33.7L576.1,34.4M576.1,33.4L582.7,34.0M582.7,33.0L589.3,33.6M589.3,32.6L595.9,33.3M595.9,32.3L602.5,32.4M602.5,31.4L609.1,31.5M609.1,30.5L615.7,30.7M615.7,29.7L622.3,29.8M622.3,28.8L628.9,28.9M628.9,27.9L635.5,28.1M635.5,27.1L642.1,27.2M642.1,26.2L648.7,26.3M648.7,25.3L655.3,25.5M655.3,24.5L655.6,25.4M382.3,24.3L385.3,26.0M385.3,25.0L392.6,27.7M392.6,26.7L399.9,29.4M399.9,28.4L407.2,31.1M407.2,30.1L414.5,32.7M414.5,31.7L421.8,34.4M421.8,33.4L429.1,36.1M429.1,35.1L436.4,37.7M436.4,36.7L443.7,39.2M443.7,38.2L450.3,39.9M450.3,38.9L456.9,40.6M456.9,39.6L463.5,41.3M463.5,40.3L470.1,42.0M470.1,41.0L476.7,42.6M476.7,41.6L483.3,43.1M483.3,42.1L489.9,43.6M489.9,42.6L496.5,43.8M496.5,42.8L503.1,43.9M503.1,42.9L509.7,43.9M509.7,42.9L516.3,43.9M516.3,42.9L522.9,43.7M522.9,42.7L529.5,43.3M529.5,42.3L536.1,42.9M536.1,41.9L542.7,42.5M542.7,41.5L549.3,42.1M549.3,41.1L555.9,41.6M555.9,40.6L562.5,41.2M562.5,40.2L569.1,40.8M569.1,39.8L575.7,40.4M575.7,39.4L582.3,39.9M582.3,38.9L588.9,39.5M588.9,38.5L595.5,39.1M595.5,38.1L602.1,38.2M602.1,37.2L608.7,37.3M608.7,36.3L615.3,36.4M615.3,35.4L621.9,35.4M621.9,34.4L628.5,34.5M628.5,33.5L635.1,33.6M635.1,32.6L641.7,32.7M641.7,31.7L648.3,31.8M648.3,30.8L654.9,30.9M654.9,29.9L655.3,30.8M381.9,31.2L384.9,32.9M384.9,31.9L392.2,34.5M392.2,33.5L399.6,36.2M399.6,35.2L406.9,37.8M406.9,36.8L414.2,39.5M414.2,38.5L421.5,41.1M421.5,40.1L428.8,42.8M428.8,41.8L436.1,44.3M436.1,43.3L443.4,45.7M443.4,44.7L450.0,46.4M450.0,45.4L456.6,47.2M456.6,46.2L463.2,48.0M463.2,47.0L469.8,48.7M469.8,47.7L476.4,49.2M476.4,48.2L483.0,49.7M483.0,48.7L489.6,50.1M489.6,49.1L496.2,50.4M496.2,49.4L502.8,50.4M502.8,49.4L509.4,50.4M509.4,49.4L516.0,50.4M516.0,49.4L522.6,50.2M522.6,49.2L529.2,49.8M529.2,48.8L535.8,49.3M535.8,48.3L542.4,48.8M542.4,47.8L549.0,48.4M549.0,47.4L555.6,47.9M555.6,46.9L562.2,47.4M562.2,46.4L568.8,46.9M568.8,45.9L575.4,46.4M575.4,45.4L582.0,45.9M582.0,44.9L588.6,45.4M588.6,44.4L595.2,44.9M595.2,43.9L601.8,43.9M601.8,42.9L608.4,43.0M608.4,42.0L615.0,42.0M615.0,41.0L621.6,41.1M621.6,40.1L628.2,40.1M628.2,39.1L634.8,39.1M634.8,38.1L641.4,38.2M641.4,37.2L648.0,37.2M648.0,36.2L654.6,36.3M654.6,35.3L655.0,36.2M381.6,38.1L384.6,39.8M384.6,38.8L391.9,41.4M391.9,40.4L399.2,43.0M399.2,42.0L406.5,44.6M406.5,43.6L413.8,46.2M413.8,45.2L421.1,47.8M421.1,46.8L428.4,49.4M428.4,48.4L435.7,50.9M435.7,49.9L443.0,52.2M443.0,51.2L449.6,53.0M449.6,52.0L456.2,53.8M456.2,52.8L462.8,54.6M462.8,53.6L469.4,55.4M469.4,54.4L476.0,55.9M476.0,54.9L482.6,56.3M482.6,55.3L489.2,56.7M489.2,55.7L495.8,56.9M495.8,55.9L502.4,56.9M502.4,55.9L509.0,56.9M509.0,55.9L515.6,56.9M515.6,55.9L522.2,56.8M522.2,55.8L528.8,56.2M528.8,55.2L535.4,55.7M535.4,54.7L542.0,55.2M542.0,54.2L548.6,54.7M548.6,53.7L555.2,54.1M555.2,53.1L561.8,53.5M561.8,52.5L568.4,52.9M568.4,51.9L575.0,52.4M575.0,51.4L581.6,51.8M581.6,50.8L588.2,51.2M588.2,50.2L594.8,50.7M594.8,49.7L601.4,49.7M601.4,48.7L608.0,48.7M608.0,47.7L614.6,47.7M614.6,46.7L621.2,46.7M621.2,45.7L627.8,45.7M627.8,44.7L634.4,44.7M634.4,43.7L641.0,43.7M641.0,42.7L647.6,42.7M647.6,41.7L654.2,41.7M654.2,40.7L654.6,41.6M381.2,45.0L384.2,46.7M384.2,45.7L391.6,48.2M391.6,47.2L398.9,49.8M398.9,48.8L406.2,51.4M406.2,50.4L413.5,52.9M413.5,51.9L420.8,54.5M420.8,53.5L428.1,56.1M428.1,55.1L435.4,57.5M435.4,56.5L442.7,58.7M442.7,57.7L449.3,59.6M449.3,58.6L455.9,60.4M455.9,59.4L462.5,61.3M462.5,60.3L469.1,62.1M469.1,61.1L475.7,62.6M475.7,61.6L482.3,62.9M482.3,61.9L488.9,63.2M488.9,62.2L495.5,63.4M495.5,62.4L502.1,63.5M502.1,62.5L508.7,63.5M508.7,62.5L515.3,63.4M515.3,62.4L521.9,63.3M521.9,62.3L528.5,62.7M528.5,61.7L535.1,62.1M535.1,61.1L541.7,61.6M541.7,60.6L548.3,60.9M548.3,59.9L554.9,60.3M554.9,59.3L561.5,59.7M561.5,58.7L568.1,59.0M568.1,58.0L574.7,58.4M574.7,57.4L581.3,57.7M581.3,56.7L587.9,57.1M587.9,56.1L594.5,56.5M594.5,55.5L601.1,55.5M601.1,54.5L607.7,54.4M607.7,53.4L614.3,53.4M614.3,52.4L620.9,52.3M620.9,51.3L627.5,51.3M627.5,50.3L634.1,50.2M634.1,49.2L640.7,49.2M640.7,48.2L647.3,48.1M647.3,47.1L653.9,47.1M653.9,46.1L654.2,47.0M380.9,51.9L383.9,53.6M383.9,52.6L391.2,55.1M391.2,54.1L398.5,56.6M398.5,55.6L405.8,58.1M405.8,57.1L413.1,59.7M413.1,58.7L420.4,61.2M420.4,60.2L427.7,62.7M427.7,61.7L435.0,64.0M435.0,63.0L442.3,65.2M442.3,64.2L448.9,66.1M448.9,65.1L455.5,67.0M455.5,66.0L462.1,67.9M462.1,66.9L468.7,68.8M468.7,67.8L475.3,69.3M475.3,68.3L481.9,69.5M481.9,68.5L488.5,69.8M488.5,68.8L495.1,69.9M495.1,68.9L501.7,70.0M501.7,69.0L508.3,70.0M508.3,69.0L514.9,70.0M514.9,69.0L521.5,69.8M521.5,68.8L528.1,69.2M528.1,68.2L534.7,68.5M534.7,67.5L541.3,67.9M541.3,66.9L547.9,67.2M547.9,66.2L554.5,66.5M554.5,65.5L561.1,65.8M561.1,64.8L567.7,65.1M567.7,64.1L574.3,64.4M574.3,63.4L580.9,63.7M580.9,62.7L587.5,63.0M587.5,62.0L594.1,62.2M594.1,61.2L600.7,61.2M600.7,60.2L607.3,60.2M607.3,59.2L613.9,59.1M613.9,58.1L620.5,58.0M620.5,57.0L627.1,56.9M627.1,55.9L633.7,55.8M633.7,54.8L640.3,54.7M640.3,53.7L646.9,53.6M646.9,52.6L653.5,52.5M653.5,51.5L653.9,52.4M380.6,58.8L383.6,60.4M383.6,59.4L390.9,61.9M390.9,60.9L398.2,63.4M398.2,62.4L405.5,64.9M405.5,63.9L412.8,66.4M412.8,65.4L420.1,67.9M420.1,66.9L427.4,69.4M427.4,68.4L434.7,70.6M434.7,69.6L442.0,71.8M442.0,70.8L448.6,72.7M448.6,71.7L455.2,73.6M455.2,72.6L461.8,74.6M461.8,73.6L468.4,75.5M468.4,74.5L475.0,75.9M475.0,74.9L481.6,76.1M481.6,75.1L488.2,76.3M488.2,75.3L494.8,76.5M494.8,75.5L501.4,76.6M501.4,75.6L508.0,76.5M508.0,75.5L514.6,76.5M514.6,75.5L521.2,76.4M521.2,75.4L527.8,75.7M527.8,74.7L534.4,75.0M534.4,74.0L541.0,74.3M541.0,73.3L547.6,73.5M547.6,72.5L554.2,72.7M554.2,71.7L560.8,72.0M560.8,71.0L567.4,71.2M567.4,70.2L574.0,70.4M574.0,69.4L580.6,69.6M580.6,68.6L587.2,68.8M587.2,67.8L593.8,68.0M593.8,67.0L600.4,67.0M600.4,66.0L607.0,65.9M607.0,64.9L613.6,64.7M613.6,63.7L620.2,63.6M620.2,62.6L626.8,62.4M626.8,61.4L633.4,61.3M633.4,60.3L640.0,60.2M640.0,59.2L646.6,59.0M646.6,58.0L653.2,57.9M653.2,56.9L653.5,57.8" stroke="#000" stroke-opacity="0.88" stroke-width="1.15" fill="none"/>
<polygon points="294.9,28.4 304.7,42.1 312.0,43.0 324.3,48.0 344.0,52.9 345.6,57.0 322.0,51.5 302.0,45.5 294.3,31.0" fill="#8c7414"/><clipPath id="mc3"><polygon points="294.9,28.4 304.7,42.1 312.0,43.0 324.3,48.0 344.0,52.9 345.6,57.0 322.0,51.5 302.0,45.5 294.3,31.0"/></clipPath>
<g clip-path="url(#mc3)" stroke="#000" stroke-opacity="0.6" stroke-width="1.0">
<line x1="248.4" y1="15.2" x2="339.8" y2="-31.4"/>
<line x1="249.7" y1="17.9" x2="341.1" y2="-28.7"/>
<line x1="251.1" y1="20.5" x2="342.5" y2="-26.0"/>
<line x1="252.4" y1="23.2" x2="343.9" y2="-23.4"/>
<line x1="253.8" y1="25.9" x2="345.2" y2="-20.7"/>
<line x1="255.2" y1="28.6" x2="346.6" y2="-18.0"/>
<line x1="256.5" y1="31.2" x2="348.0" y2="-15.3"/>
<line x1="257.9" y1="33.9" x2="349.3" y2="-12.7"/>
<line x1="259.3" y1="36.6" x2="350.7" y2="-10.0"/>
<line x1="260.6" y1="39.3" x2="352.0" y2="-7.3"/>
<line x1="262.0" y1="41.9" x2="353.4" y2="-4.6"/>
<line x1="263.3" y1="44.6" x2="354.8" y2="-2.0"/>
<line x1="264.7" y1="47.3" x2="356.1" y2="0.7"/>
<line x1="266.1" y1="50.0" x2="357.5" y2="3.4"/>
<line x1="267.4" y1="52.6" x2="358.8" y2="6.0"/>
<line x1="268.8" y1="55.3" x2="360.2" y2="8.7"/>
<line x1="270.2" y1="58.0" x2="361.6" y2="11.4"/>
<line x1="271.5" y1="60.6" x2="362.9" y2="14.1"/>
<line x1="272.9" y1="63.3" x2="364.3" y2="16.7"/>
<line x1="274.2" y1="66.0" x2="365.7" y2="19.4"/>
<line x1="275.6" y1="68.7" x2="367.0" y2="22.1"/>
<line x1="277.0" y1="71.3" x2="368.4" y2="24.8"/>
<line x1="278.3" y1="74.0" x2="369.7" y2="27.4"/>
<line x1="279.7" y1="76.7" x2="371.1" y2="30.1"/>
<line x1="281.1" y1="79.4" x2="372.5" y2="32.8"/>
<line x1="282.4" y1="82.0" x2="373.8" y2="35.4"/>
<line x1="283.8" y1="84.7" x2="375.2" y2="38.1"/>
<line x1="285.1" y1="87.4" x2="376.6" y2="40.8"/>
<line x1="286.5" y1="90.0" x2="377.9" y2="43.5"/>
<line x1="287.9" y1="92.7" x2="379.3" y2="46.1"/>
<line x1="289.2" y1="95.4" x2="380.6" y2="48.8"/>
<line x1="290.6" y1="98.1" x2="382.0" y2="51.5"/>
<line x1="291.9" y1="100.7" x2="383.4" y2="54.2"/>
<line x1="293.3" y1="103.4" x2="384.7" y2="56.8"/>
<line x1="294.7" y1="106.1" x2="386.1" y2="59.5"/>
<line x1="296.0" y1="108.8" x2="387.5" y2="62.2"/>
<line x1="297.4" y1="111.4" x2="388.8" y2="64.9"/>
<line x1="298.8" y1="114.1" x2="390.2" y2="67.5"/>
<line x1="300.1" y1="116.8" x2="391.5" y2="70.2"/>
<line x1="360.0" y1="-25.3" x2="393.4" y2="71.7"/>
<line x1="354.3" y1="-23.4" x2="387.7" y2="73.6"/>
<line x1="348.6" y1="-21.4" x2="382.0" y2="75.6"/>
<line x1="343.0" y1="-19.5" x2="376.4" y2="77.5"/>
<line x1="337.3" y1="-17.5" x2="370.7" y2="79.5"/>
<line x1="331.6" y1="-15.6" x2="365.0" y2="81.4"/>
<line x1="325.9" y1="-13.6" x2="359.3" y2="83.4"/>
<line x1="320.3" y1="-11.7" x2="353.7" y2="85.3"/>
<line x1="314.6" y1="-9.7" x2="348.0" y2="87.3"/>
<line x1="308.9" y1="-7.8" x2="342.3" y2="89.3"/>
<line x1="303.2" y1="-5.8" x2="336.7" y2="91.2"/>
<line x1="297.6" y1="-3.9" x2="331.0" y2="93.2"/>
<line x1="291.9" y1="-1.9" x2="325.3" y2="95.1"/>
<line x1="286.2" y1="0.1" x2="319.6" y2="97.1"/>
<line x1="280.6" y1="2.0" x2="314.0" y2="99.0"/>
<line x1="274.9" y1="4.0" x2="308.3" y2="101.0"/>
<line x1="269.2" y1="5.9" x2="302.6" y2="102.9"/>
<line x1="263.5" y1="7.9" x2="296.9" y2="104.9"/>
<line x1="257.9" y1="9.8" x2="291.3" y2="106.8"/>
<line x1="252.2" y1="11.8" x2="285.6" y2="108.8"/>
<line x1="246.5" y1="13.7" x2="279.9" y2="110.7"/>
</g>
<polygon points="309.6,2.0 369.0,2.0 364.5,24.0 350.8,22.5 339.0,19.6 316.5,39.2 316.5,36.2 307.7,17.6" fill="#96d21c"/><clipPath id="mc4"><polygon points="309.6,2.0 369.0,2.0 364.5,24.0 350.8,22.5 339.0,19.6 316.5,39.2 316.5,36.2 307.7,17.6"/></clipPath>
<g clip-path="url(#mc4)" stroke="#000" stroke-opacity="0.78" stroke-width="0.95">
<line x1="300.5" y1="-65.2" x2="417.7" y2="-29.4"/>
<line x1="298.7" y1="-59.5" x2="416.0" y2="-23.6"/>
<line x1="297.0" y1="-53.7" x2="414.2" y2="-17.9"/>
<line x1="295.2" y1="-48.0" x2="412.5" y2="-12.2"/>
<line x1="293.5" y1="-42.3" x2="410.7" y2="-6.4"/>
<line x1="291.7" y1="-36.5" x2="409.0" y2="-0.7"/>
<line x1="290.0" y1="-30.8" x2="407.2" y2="5.1"/>
<line x1="288.2" y1="-25.1" x2="405.5" y2="10.8"/>
<line x1="286.5" y1="-19.3" x2="403.7" y2="16.5"/>
<line x1="284.7" y1="-13.6" x2="401.9" y2="22.3"/>
<line x1="282.9" y1="-7.8" x2="400.2" y2="28.0"/>
<line x1="281.2" y1="-2.1" x2="398.4" y2="33.7"/>
<line x1="279.4" y1="3.6" x2="396.7" y2="39.5"/>
<line x1="277.7" y1="9.4" x2="394.9" y2="45.2"/>
<line x1="275.9" y1="15.1" x2="393.2" y2="51.0"/>
<line x1="274.2" y1="20.8" x2="391.4" y2="56.7"/>
<line x1="272.4" y1="26.6" x2="389.7" y2="62.4"/>
<line x1="270.7" y1="32.3" x2="387.9" y2="68.2"/>
<line x1="268.9" y1="38.1" x2="386.2" y2="73.9"/>
<line x1="267.2" y1="43.8" x2="384.4" y2="79.6"/>
<line x1="265.4" y1="49.5" x2="382.6" y2="85.4"/>
<line x1="263.6" y1="55.3" x2="380.9" y2="91.1"/>
<line x1="261.9" y1="61.0" x2="379.1" y2="96.9"/>
<line x1="260.1" y1="66.8" x2="377.4" y2="102.6"/>
<line x1="258.4" y1="72.5" x2="375.6" y2="108.3"/>
<line x1="254.8" y1="60.4" x2="288.6" y2="-57.4"/>
<line x1="260.9" y1="62.2" x2="294.7" y2="-55.7"/>
<line x1="266.9" y1="63.9" x2="300.7" y2="-54.0"/>
<line x1="273.0" y1="65.6" x2="306.8" y2="-52.2"/>
<line x1="279.1" y1="67.4" x2="312.9" y2="-50.5"/>
<line x1="285.1" y1="69.1" x2="318.9" y2="-48.7"/>
<line x1="291.2" y1="70.8" x2="325.0" y2="-47.0"/>
<line x1="297.2" y1="72.6" x2="331.0" y2="-45.3"/>
<line x1="303.3" y1="74.3" x2="337.1" y2="-43.5"/>
<line x1="309.3" y1="76.1" x2="343.1" y2="-41.8"/>
<line x1="315.4" y1="77.8" x2="349.2" y2="-40.1"/>
<line x1="321.5" y1="79.5" x2="355.2" y2="-38.3"/>
<line x1="327.5" y1="81.3" x2="361.3" y2="-36.6"/>
<line x1="333.6" y1="83.0" x2="367.4" y2="-34.9"/>
<line x1="339.6" y1="84.7" x2="373.4" y2="-33.1"/>
<line x1="345.7" y1="86.5" x2="379.5" y2="-31.4"/>
<line x1="351.7" y1="88.2" x2="385.5" y2="-29.6"/>
<line x1="357.8" y1="89.9" x2="391.6" y2="-27.9"/>
<line x1="363.8" y1="91.7" x2="397.6" y2="-26.2"/>
<line x1="369.9" y1="93.4" x2="403.7" y2="-24.4"/>
<line x1="376.0" y1="95.2" x2="409.8" y2="-22.7"/>
<line x1="382.0" y1="96.9" x2="415.8" y2="-21.0"/>
<line x1="388.1" y1="98.6" x2="421.9" y2="-19.2"/>
</g>
<polygon points="306.7,2.0 309.6,2.0 307.7,17.6 316.5,36.2 316.5,39.2 312.0,43.0 304.7,42.1 294.9,28.4" fill="#dcb818"/><clipPath id="mc5"><polygon points="306.7,2.0 309.6,2.0 307.7,17.6 316.5,36.2 316.5,39.2 312.0,43.0 304.7,42.1 294.9,28.4"/></clipPath>
<g clip-path="url(#mc5)" stroke="#000" stroke-opacity="0.78" stroke-width="0.95">
<line x1="280.2" y1="-34.4" x2="358.6" y2="-10.5"/>
<line x1="278.5" y1="-28.7" x2="356.9" y2="-4.7"/>
<line x1="276.7" y1="-23.0" x2="355.1" y2="1.0"/>
<line x1="275.0" y1="-17.2" x2="353.4" y2="6.8"/>
<line x1="273.2" y1="-11.5" x2="351.6" y2="12.5"/>
<line x1="271.5" y1="-5.7" x2="349.9" y2="18.2"/>
<line x1="269.7" y1="-0.0" x2="348.1" y2="24.0"/>
<line x1="268.0" y1="5.7" x2="346.4" y2="29.7"/>
<line x1="266.2" y1="11.5" x2="344.6" y2="35.4"/>
<line x1="264.4" y1="17.2" x2="342.9" y2="41.2"/>
<line x1="262.7" y1="22.9" x2="341.1" y2="46.9"/>
<line x1="260.9" y1="28.7" x2="339.4" y2="52.7"/>
<line x1="259.2" y1="34.4" x2="337.6" y2="58.4"/>
<line x1="257.4" y1="40.2" x2="335.8" y2="64.1"/>
<line x1="255.7" y1="45.9" x2="334.1" y2="69.9"/>
<line x1="253.9" y1="51.6" x2="332.3" y2="75.6"/>
<line x1="252.2" y1="57.4" x2="330.6" y2="81.3"/>
<line x1="246.0" y1="48.0" x2="268.6" y2="-30.8"/>
<line x1="252.0" y1="49.8" x2="274.6" y2="-29.1"/>
<line x1="258.1" y1="51.5" x2="280.7" y2="-27.3"/>
<line x1="264.1" y1="53.2" x2="286.7" y2="-25.6"/>
<line x1="270.2" y1="55.0" x2="292.8" y2="-23.9"/>
<line x1="276.2" y1="56.7" x2="298.8" y2="-22.1"/>
<line x1="282.3" y1="58.4" x2="304.9" y2="-20.4"/>
<line x1="288.3" y1="60.2" x2="310.9" y2="-18.6"/>
<line x1="294.4" y1="61.9" x2="317.0" y2="-16.9"/>
<line x1="300.5" y1="63.6" x2="323.1" y2="-15.2"/>
<line x1="306.5" y1="65.4" x2="329.1" y2="-13.4"/>
<line x1="312.6" y1="67.1" x2="335.2" y2="-11.7"/>
<line x1="318.6" y1="68.9" x2="341.2" y2="-10.0"/>
<line x1="324.7" y1="70.6" x2="347.3" y2="-8.2"/>
<line x1="330.7" y1="72.3" x2="353.3" y2="-6.5"/>
<line x1="336.8" y1="74.1" x2="359.4" y2="-4.8"/>
<line x1="342.8" y1="75.8" x2="365.4" y2="-3.0"/>
</g>
<polygon points="368.0,2.0 388.0,2.0 385.0,24.0 364.0,24.0" fill="#38c828"/><clipPath id="mc6"><polygon points="368.0,2.0 388.0,2.0 385.0,24.0 364.0,24.0"/></clipPath>
<g clip-path="url(#mc6)" stroke="#000" stroke-opacity="0.85" stroke-width="1.0">
<line x1="368.2" y1="-27.1" x2="411.7" y2="-6.8"/>
<line x1="365.9" y1="-22.1" x2="409.4" y2="-1.8"/>
<line x1="363.5" y1="-17.1" x2="407.0" y2="3.2"/>
<line x1="361.2" y1="-12.1" x2="404.7" y2="8.2"/>
<line x1="358.9" y1="-7.1" x2="402.4" y2="13.2"/>
<line x1="356.6" y1="-2.1" x2="400.1" y2="18.2"/>
<line x1="354.2" y1="2.9" x2="397.8" y2="23.1"/>
<line x1="351.9" y1="7.8" x2="395.4" y2="28.1"/>
<line x1="349.6" y1="12.8" x2="393.1" y2="33.1"/>
<line x1="347.3" y1="17.8" x2="390.8" y2="38.1"/>
<line x1="345.0" y1="22.8" x2="388.5" y2="43.1"/>
<line x1="342.6" y1="27.8" x2="386.1" y2="48.1"/>
<line x1="340.3" y1="32.8" x2="383.8" y2="53.1"/>
<line x1="334.0" y1="23.2" x2="350.4" y2="-21.9"/>
<line x1="339.6" y1="25.3" x2="356.0" y2="-19.8"/>
<line x1="345.2" y1="27.3" x2="361.7" y2="-17.8"/>
<line x1="350.9" y1="29.4" x2="367.3" y2="-15.7"/>
<line x1="356.5" y1="31.4" x2="372.9" y2="-13.7"/>
<line x1="362.2" y1="33.5" x2="378.6" y2="-11.6"/>
<line x1="367.8" y1="35.6" x2="384.2" y2="-9.6"/>
<line x1="373.4" y1="37.6" x2="389.8" y2="-7.5"/>
<line x1="379.1" y1="39.7" x2="395.5" y2="-5.4"/>
<line x1="384.7" y1="41.7" x2="401.1" y2="-3.4"/>
<line x1="390.3" y1="43.8" x2="406.8" y2="-1.3"/>
<line x1="396.0" y1="45.8" x2="412.4" y2="0.7"/>
<line x1="401.6" y1="47.9" x2="418.0" y2="2.8"/>
</g>
<polygon points="316.5,39.2 339.0,19.6 350.8,22.5 350.0,45.0 345.4,53.0 324.3,48.0 312.0,43.0" fill="#e06414"/><clipPath id="mc7"><polygon points="316.5,39.2 339.0,19.6 350.8,22.5 350.0,45.0 345.4,53.0 324.3,48.0 312.0,43.0"/></clipPath>
<g clip-path="url(#mc7)" stroke="#000" stroke-opacity="0.78" stroke-width="0.95">
<line x1="275.0" y1="11.1" x2="344.2" y2="-24.1"/>
<line x1="277.8" y1="16.5" x2="346.9" y2="-18.7"/>
<line x1="280.5" y1="21.8" x2="349.6" y2="-13.4"/>
<line x1="283.2" y1="27.2" x2="352.4" y2="-8.0"/>
<line x1="285.9" y1="32.5" x2="355.1" y2="-2.7"/>
<line x1="288.7" y1="37.9" x2="357.8" y2="2.6"/>
<line x1="291.4" y1="43.2" x2="360.5" y2="8.0"/>
<line x1="294.1" y1="48.6" x2="363.2" y2="13.3"/>
<line x1="296.8" y1="53.9" x2="366.0" y2="18.7"/>
<line x1="299.6" y1="59.3" x2="368.7" y2="24.0"/>
<line x1="302.3" y1="64.6" x2="371.4" y2="29.4"/>
<line x1="305.0" y1="70.0" x2="374.1" y2="34.7"/>
<line x1="307.7" y1="75.3" x2="376.9" y2="40.1"/>
<line x1="310.4" y1="80.6" x2="379.6" y2="45.4"/>
<line x1="313.2" y1="86.0" x2="382.3" y2="50.8"/>
<line x1="315.9" y1="91.3" x2="385.0" y2="56.1"/>
<line x1="318.6" y1="96.7" x2="387.8" y2="61.5"/>
<line x1="361.8" y1="-15.2" x2="387.1" y2="58.2"/>
<line x1="355.6" y1="-13.1" x2="380.9" y2="60.3"/>
<line x1="349.5" y1="-11.0" x2="374.8" y2="62.4"/>
<line x1="343.4" y1="-8.9" x2="368.6" y2="64.5"/>
<line x1="337.2" y1="-6.7" x2="362.5" y2="66.6"/>
<line x1="331.1" y1="-4.6" x2="356.3" y2="68.8"/>
<line x1="324.9" y1="-2.5" x2="350.2" y2="70.9"/>
<line x1="318.8" y1="-0.4" x2="344.0" y2="73.0"/>
<line x1="312.6" y1="1.7" x2="337.9" y2="75.1"/>
<line x1="306.5" y1="3.8" x2="331.7" y2="77.2"/>
<line x1="300.3" y1="6.0" x2="325.6" y2="79.3"/>
<line x1="294.2" y1="8.1" x2="319.4" y2="81.5"/>
<line x1="288.0" y1="10.2" x2="313.3" y2="83.6"/>
<line x1="281.9" y1="12.3" x2="307.2" y2="85.7"/>
<line x1="275.7" y1="14.4" x2="301.0" y2="87.8"/>
</g>
<polygon points="338,45 344,44 345,51 340,50" fill="#c8a818"/>
<polygon points="349.0,22.5 378.0,24.0 380.0,30.0 374.0,45.0 370.0,63.4 346.7,63.2 344.6,44.0 349.0,40.0" fill="#e26814"/><clipPath id="mc8"><polygon points="349.0,22.5 378.0,24.0 380.0,30.0 374.0,45.0 370.0,63.4 346.7,63.2 344.6,44.0 349.0,40.0"/></clipPath>
<g clip-path="url(#mc8)" stroke="#000" stroke-opacity="0.8" stroke-width="1.0">
<line x1="307.8" y1="7.7" x2="385.6" y2="-17.6"/>
<line x1="309.8" y1="13.6" x2="387.6" y2="-11.6"/>
<line x1="311.7" y1="19.6" x2="389.5" y2="-5.6"/>
<line x1="313.7" y1="25.6" x2="391.5" y2="0.4"/>
<line x1="315.6" y1="31.6" x2="393.4" y2="6.3"/>
<line x1="317.6" y1="37.6" x2="395.4" y2="12.3"/>
<line x1="319.5" y1="43.6" x2="397.3" y2="18.3"/>
<line x1="321.5" y1="49.6" x2="399.3" y2="24.3"/>
<line x1="323.4" y1="55.6" x2="401.2" y2="30.3"/>
<line x1="325.3" y1="61.6" x2="403.1" y2="36.3"/>
<line x1="327.3" y1="67.6" x2="405.1" y2="42.3"/>
<line x1="329.2" y1="73.6" x2="407.0" y2="48.3"/>
<line x1="331.2" y1="79.6" x2="409.0" y2="54.3"/>
<line x1="333.1" y1="85.5" x2="410.9" y2="60.3"/>
<line x1="335.1" y1="91.5" x2="412.9" y2="66.3"/>
<line x1="337.0" y1="97.5" x2="414.8" y2="72.3"/>
<line x1="339.0" y1="103.5" x2="416.8" y2="78.2"/>
<line x1="307.1" y1="78.3" x2="315.7" y2="-3.1"/>
<line x1="313.5" y1="78.9" x2="322.0" y2="-2.4"/>
<line x1="319.8" y1="79.6" x2="328.4" y2="-1.7"/>
<line x1="326.2" y1="80.3" x2="334.8" y2="-1.1"/>
<line x1="332.6" y1="81.0" x2="341.1" y2="-0.4"/>
<line x1="338.9" y1="81.6" x2="347.5" y2="0.3"/>
<line x1="345.3" y1="82.3" x2="353.8" y2="0.9"/>
<line x1="351.7" y1="83.0" x2="360.2" y2="1.6"/>
<line x1="358.0" y1="83.6" x2="366.6" y2="2.3"/>
<line x1="364.4" y1="84.3" x2="372.9" y2="2.9"/>
<line x1="370.8" y1="85.0" x2="379.3" y2="3.6"/>
<line x1="377.1" y1="85.6" x2="385.7" y2="4.3"/>
<line x1="383.5" y1="86.3" x2="392.0" y2="4.9"/>
<line x1="389.8" y1="87.0" x2="398.4" y2="5.6"/>
<line x1="396.2" y1="87.6" x2="404.8" y2="6.3"/>
<line x1="402.6" y1="88.3" x2="411.1" y2="7.0"/>
<line x1="408.9" y1="89.0" x2="417.5" y2="7.6"/>
</g>
<polygon points="380.0,9.0 388.5,11.0 378.5,63.4 368.0,63.4" fill="#e4c01c"/><clipPath id="mc9"><polygon points="380.0,9.0 388.5,11.0 378.5,63.4 368.0,63.4"/></clipPath>
<g clip-path="url(#mc9)" stroke="#000" stroke-opacity="0.8" stroke-width="1.0">
<line x1="340.9" y1="-39.1" x2="446.5" y2="-12.7"/>
<line x1="339.4" y1="-32.8" x2="445.0" y2="-6.5"/>
<line x1="337.9" y1="-26.6" x2="443.4" y2="-0.3"/>
<line x1="336.3" y1="-20.4" x2="441.9" y2="5.9"/>
<line x1="334.8" y1="-14.2" x2="440.3" y2="12.1"/>
<line x1="333.2" y1="-8.0" x2="438.8" y2="18.3"/>
<line x1="331.7" y1="-1.8" x2="437.2" y2="24.5"/>
<line x1="330.1" y1="4.4" x2="435.7" y2="30.7"/>
<line x1="328.6" y1="10.6" x2="434.1" y2="36.9"/>
<line x1="327.0" y1="16.8" x2="432.6" y2="43.2"/>
<line x1="325.5" y1="23.0" x2="431.0" y2="49.4"/>
<line x1="323.9" y1="29.2" x2="429.5" y2="55.6"/>
<line x1="322.4" y1="35.5" x2="427.9" y2="61.8"/>
<line x1="320.8" y1="41.7" x2="426.4" y2="68.0"/>
<line x1="319.3" y1="47.9" x2="424.8" y2="74.2"/>
<line x1="317.7" y1="54.1" x2="423.3" y2="80.4"/>
<line x1="316.2" y1="60.3" x2="421.7" y2="86.6"/>
<line x1="314.6" y1="66.5" x2="420.2" y2="92.8"/>
<line x1="313.1" y1="72.7" x2="418.6" y2="99.0"/>
<line x1="311.5" y1="78.9" x2="417.1" y2="105.2"/>
<line x1="310.0" y1="85.1" x2="415.6" y2="111.5"/>
<line x1="300.4" y1="75.3" x2="323.0" y2="-31.1"/>
<line x1="307.1" y1="76.7" x2="329.7" y2="-29.7"/>
<line x1="313.7" y1="78.1" x2="336.3" y2="-28.3"/>
<line x1="320.4" y1="79.5" x2="343.0" y2="-26.9"/>
<line x1="327.0" y1="80.9" x2="349.7" y2="-25.5"/>
<line x1="333.7" y1="82.3" x2="356.3" y2="-24.1"/>
<line x1="340.3" y1="83.8" x2="363.0" y2="-22.7"/>
<line x1="347.0" y1="85.2" x2="369.6" y2="-21.3"/>
<line x1="353.6" y1="86.6" x2="376.3" y2="-19.8"/>
<line x1="360.3" y1="88.0" x2="382.9" y2="-18.4"/>
<line x1="366.9" y1="89.4" x2="389.6" y2="-17.0"/>
<line x1="373.6" y1="90.8" x2="396.2" y2="-15.6"/>
<line x1="380.2" y1="92.2" x2="402.9" y2="-14.2"/>
<line x1="386.9" y1="93.7" x2="409.5" y2="-12.8"/>
<line x1="393.5" y1="95.1" x2="416.2" y2="-11.4"/>
<line x1="400.2" y1="96.5" x2="422.8" y2="-9.9"/>
<line x1="406.8" y1="97.9" x2="429.5" y2="-8.5"/>
<line x1="413.5" y1="99.3" x2="436.1" y2="-7.1"/>
<line x1="420.2" y1="100.7" x2="442.8" y2="-5.7"/>
<line x1="426.8" y1="102.1" x2="449.4" y2="-4.3"/>
<line x1="433.5" y1="103.5" x2="456.1" y2="-2.9"/>
</g>
<polygon points="652.5,18.0 700.0,7.0 747.0,2.4 749.4,2.4 749.4,24.0 746.0,38.0 739.0,46.0 711.6,50.0 652.5,60.8" fill="#0a18d6"/><clipPath id="mc10"><polygon points="652.5,18.0 700.0,7.0 747.0,2.4 749.4,2.4 749.4,24.0 746.0,38.0 739.0,46.0 711.6,50.0 652.5,60.8"/></clipPath>
<g clip-path="url(#mc10)" stroke="#000" stroke-opacity="0.85" stroke-width="1.05">
<line x1="559.4" y1="66.1" x2="650.4" y2="-105.0"/>
<line x1="565.4" y1="69.3" x2="656.4" y2="-101.8"/>
<line x1="571.4" y1="72.5" x2="662.4" y2="-98.7"/>
<line x1="577.4" y1="75.7" x2="668.4" y2="-95.5"/>
<line x1="583.4" y1="78.8" x2="674.4" y2="-92.3"/>
<line x1="589.4" y1="82.0" x2="680.4" y2="-89.1"/>
<line x1="595.4" y1="85.2" x2="686.4" y2="-85.9"/>
<line x1="601.4" y1="88.4" x2="692.4" y2="-82.7"/>
<line x1="607.4" y1="91.6" x2="698.4" y2="-79.5"/>
<line x1="613.4" y1="94.8" x2="704.4" y2="-76.3"/>
<line x1="619.4" y1="98.0" x2="710.4" y2="-73.1"/>
<line x1="625.4" y1="101.2" x2="716.4" y2="-69.9"/>
<line x1="631.4" y1="104.4" x2="722.4" y2="-66.7"/>
<line x1="637.4" y1="107.6" x2="728.4" y2="-63.5"/>
<line x1="643.5" y1="110.8" x2="734.4" y2="-60.3"/>
<line x1="649.5" y1="114.0" x2="740.4" y2="-57.2"/>
<line x1="655.5" y1="117.2" x2="746.4" y2="-54.0"/>
<line x1="661.5" y1="120.4" x2="752.4" y2="-50.8"/>
<line x1="667.5" y1="123.5" x2="758.4" y2="-47.6"/>
<line x1="673.5" y1="126.7" x2="764.5" y2="-44.4"/>
<line x1="679.5" y1="129.9" x2="770.5" y2="-41.2"/>
<line x1="685.5" y1="133.1" x2="776.5" y2="-38.0"/>
<line x1="691.5" y1="136.3" x2="782.5" y2="-34.8"/>
<line x1="697.5" y1="139.5" x2="788.5" y2="-31.6"/>
<line x1="703.5" y1="142.7" x2="794.5" y2="-28.4"/>
<line x1="709.5" y1="145.9" x2="800.5" y2="-25.2"/>
<line x1="715.5" y1="149.1" x2="806.5" y2="-22.0"/>
<line x1="721.5" y1="152.3" x2="812.5" y2="-18.8"/>
<line x1="727.5" y1="155.5" x2="818.5" y2="-15.6"/>
<line x1="733.5" y1="158.7" x2="824.5" y2="-12.5"/>
<line x1="739.5" y1="161.9" x2="830.5" y2="-9.3"/>
<line x1="745.5" y1="165.0" x2="836.5" y2="-6.1"/>
<line x1="751.5" y1="168.2" x2="842.5" y2="-2.9"/>
<line x1="641.4" y1="-98.6" x2="825.7" y2="-38.7"/>
<line x1="639.4" y1="-92.7" x2="823.8" y2="-32.8"/>
<line x1="637.5" y1="-86.8" x2="821.8" y2="-26.9"/>
<line x1="635.6" y1="-80.9" x2="819.9" y2="-21.0"/>
<line x1="633.7" y1="-75.0" x2="818.0" y2="-15.1"/>
<line x1="631.8" y1="-69.1" x2="816.1" y2="-9.2"/>
<line x1="629.9" y1="-63.2" x2="814.2" y2="-3.3"/>
<line x1="628.0" y1="-57.3" x2="812.3" y2="2.6"/>
<line x1="626.0" y1="-51.4" x2="810.4" y2="8.5"/>
<line x1="624.1" y1="-45.5" x2="808.4" y2="14.4"/>
<line x1="622.2" y1="-39.6" x2="806.5" y2="20.3"/>
<line x1="620.3" y1="-33.7" x2="804.6" y2="26.2"/>
<line x1="618.4" y1="-27.8" x2="802.7" y2="32.1"/>
<line x1="616.5" y1="-21.9" x2="800.8" y2="38.0"/>
<line x1="614.5" y1="-16.0" x2="798.9" y2="43.9"/>
<line x1="612.6" y1="-10.1" x2="796.9" y2="49.8"/>
<line x1="610.7" y1="-4.2" x2="795.0" y2="55.6"/>
<line x1="608.8" y1="1.7" x2="793.1" y2="61.5"/>
<line x1="606.9" y1="7.6" x2="791.2" y2="67.4"/>
<line x1="605.0" y1="13.4" x2="789.3" y2="73.3"/>
<line x1="603.0" y1="19.3" x2="787.4" y2="79.2"/>
<line x1="601.1" y1="25.2" x2="785.4" y2="85.1"/>
<line x1="599.2" y1="31.1" x2="783.5" y2="91.0"/>
<line x1="597.3" y1="37.0" x2="781.6" y2="96.9"/>
<line x1="595.4" y1="42.9" x2="779.7" y2="102.8"/>
<line x1="593.5" y1="48.8" x2="777.8" y2="108.7"/>
<line x1="591.5" y1="54.7" x2="775.9" y2="114.6"/>
<line x1="589.6" y1="60.6" x2="773.9" y2="120.5"/>
<line x1="587.7" y1="66.5" x2="772.0" y2="126.4"/>
<line x1="585.8" y1="72.4" x2="770.1" y2="132.3"/>
<line x1="583.9" y1="78.3" x2="768.2" y2="138.2"/>
<line x1="582.0" y1="84.2" x2="766.3" y2="144.1"/>
<line x1="580.1" y1="90.1" x2="764.4" y2="150.0"/>
<line x1="578.1" y1="96.0" x2="762.5" y2="155.9"/>
<line x1="576.2" y1="101.9" x2="760.5" y2="161.8"/>
</g>
<path d="M656,20 C660,35 660,50 657,60" stroke="#000" stroke-opacity="0.35" stroke-width="4" fill="none"/>
<path d="M664,51 C667,45 671,39 674.6,35.8" stroke="#3c80f8" stroke-width="2.6" fill="none"/>
<line x1="352" y1="3" x2="347.5" y2="64" stroke="#e8e8e8" stroke-width="1"/>
<line x1="475" y1="3" x2="469.5" y2="35" stroke="#c8c8c8" stroke-width="0.8"/>
<path d="M771.8,60.5 v6 M769.5,64 h9 M771,57 l1.3,2.5 l1.8,-2.5" stroke="#fff" stroke-width="1.1" fill="none"/><circle cx="772" cy="64" r="1.4" fill="#fff"/><path d="M778,73 l-1.2,1.5 l1.2,1.5" stroke="#fff" stroke-width="1" fill="none"/>
<path d="M251,99.5 l3.5,1.5" stroke="#fff" stroke-width="1"/>
<path d="M374,154 l3,1.5" stroke="#fff" stroke-width="1"/>
</g></svg>
<div style="position:absolute;color:#dde3ea;font-size:9.8px;line-height:12px;white-space:nowrap;left:32px;top:5px">Contour Plot<br>Displacement(Mag)<br>Tracking System id = 1</div>
<svg style="position:absolute;left:0;top:0" width="200" height="213">
<rect x="31.5" y="45.50" width="8.5" height="13.64" fill="#ff0000"/>
<rect x="31.5" y="59.14" width="8.5" height="13.64" fill="#ff6a00"/>
<rect x="31.5" y="72.78" width="8.5" height="13.64" fill="#ffd400"/>
<rect x="31.5" y="86.42" width="8.5" height="13.64" fill="#a8f000"/>
<rect x="31.5" y="100.06" width="8.5" height="13.64" fill="#2ee000"/>
<rect x="31.5" y="113.70" width="8.5" height="13.64" fill="#30f0a8"/>
<rect x="31.5" y="127.34" width="8.5" height="13.64" fill="#18c8dc"/>
<rect x="31.5" y="140.98" width="8.5" height="13.64" fill="#2a7cff"/>
<rect x="31.5" y="154.62" width="8.5" height="13.64" fill="#0000c8"/>
<line x1="31" y1="45.5" x2="48" y2="45.5" stroke="#c8ccd4" stroke-width="1"/>
<text x="49.5" y="49.1" font-size="9.6" fill="#dde3ea">8.618E+01</text>
<line x1="31" y1="59.1" x2="48" y2="59.1" stroke="#c8ccd4" stroke-width="1"/>
<text x="49.5" y="62.7" font-size="9.6" fill="#dde3ea">7.660E+01</text>
<line x1="31" y1="72.8" x2="48" y2="72.8" stroke="#c8ccd4" stroke-width="1"/>
<text x="49.5" y="76.4" font-size="9.6" fill="#dde3ea">6.703E+01</text>
<line x1="31" y1="86.4" x2="48" y2="86.4" stroke="#c8ccd4" stroke-width="1"/>
<text x="49.5" y="90.0" font-size="9.6" fill="#dde3ea">5.745E+01</text>
<line x1="31" y1="100.1" x2="48" y2="100.1" stroke="#c8ccd4" stroke-width="1"/>
<text x="49.5" y="103.7" font-size="9.6" fill="#dde3ea">4.788E+01</text>
<line x1="31" y1="113.7" x2="48" y2="113.7" stroke="#c8ccd4" stroke-width="1"/>
<text x="49.5" y="117.3" font-size="9.6" fill="#dde3ea">3.830E+01</text>
<line x1="31" y1="127.3" x2="48" y2="127.3" stroke="#c8ccd4" stroke-width="1"/>
<text x="49.5" y="130.9" font-size="9.6" fill="#dde3ea">2.873E+01</text>
<line x1="31" y1="141.0" x2="48" y2="141.0" stroke="#c8ccd4" stroke-width="1"/>
<text x="49.5" y="144.6" font-size="9.6" fill="#dde3ea">1.915E+01</text>
<line x1="31" y1="154.6" x2="48" y2="154.6" stroke="#c8ccd4" stroke-width="1"/>
<text x="49.5" y="158.2" font-size="9.6" fill="#dde3ea">9.575E+00</text>
<line x1="31" y1="168.3" x2="48" y2="168.3" stroke="#c8ccd4" stroke-width="1"/>
<text x="49.5" y="171.9" font-size="9.6" fill="#dde3ea">0.000E+00</text>
<rect x="32.5" y="175.5" width="7.5" height="5.5" fill="#c0c0c0"/>
<text x="49.5" y="181.5" font-size="9.6" fill="#8e9aa8">No result</text>
<text x="32.5" y="193.5" font-size="9.6" fill="#dde3ea">Max = 8.618E+01</text>
<text x="32.5" y="205.5" font-size="9.6" fill="#dde3ea">Min = 0.000E+00</text>
<path d="M53,178 L53,199 M44,203 L53,199 L65,202 M53,178 l-2,4 M53,178 l2,4" stroke="#e8e8e8" stroke-width="1" fill="none"/>
</svg>
<svg style="position:absolute;left:0;top:0" width="1005" height="213" font-family="Liberation Sans, sans-serif">
<rect x="254.5" y="101.5" width="92.5" height="31" fill="#2b5379" stroke="#c4cadc" stroke-width="1"/><text x="257.2" y="114.40" font-size="11" letter-spacing="-0.35" fill="#dce0e8">251</text><text x="257.2" y="126.80" font-size="11" letter-spacing="-0.35" fill="#dce0e8">Tracking System 1</text>
<rect x="347.5" y="64.8" width="93.80000000000001" height="81.2" fill="#2b5379" stroke="#c4cadc" stroke-width="1"/><text x="350.1" y="77.60" font-size="11" letter-spacing="-0.35" fill="#dce0e8">2968</text><text x="350.1" y="90.25" font-size="11" letter-spacing="-0.35" fill="#dce0e8">Tracking System 1</text><text x="350.1" y="102.90" font-size="11" letter-spacing="-0.35" fill="#dce0e8">Mag = 7.134E+001</text><text x="350.1" y="115.55" font-size="11" letter-spacing="-0.35" fill="#dce0e8">X = 8.959E+000</text><text x="350.1" y="128.20" font-size="11" letter-spacing="-0.35" fill="#dce0e8">Y = -1.226E+001</text><text x="350.1" y="140.85" font-size="11" letter-spacing="-0.35" fill="#dce0e8">Z = 6.970E+001</text>
<rect x="376.5" y="157.2" width="91.5" height="29.80000000000001" fill="#2b5379" stroke="#c4cadc" stroke-width="1"/><text x="379.2" y="170.00" font-size="11" letter-spacing="-0.35" fill="#dce0e8">252</text><text x="379.2" y="182.40" font-size="11" letter-spacing="-0.35" fill="#dce0e8">Tracking System 1</text>
<rect x="778.8" y="65.3" width="92.30000000000007" height="31.400000000000006" fill="#2b5379" stroke="#c4cadc" stroke-width="1"/><text x="781.5" y="78.20" font-size="11" letter-spacing="-0.35" fill="#dce0e8">198</text><text x="781.5" y="90.60" font-size="11" letter-spacing="-0.35" fill="#dce0e8">Tracking System 1</text>
</svg>
<svg style="position:absolute;left:0;top:0" width="1005" height="613" viewBox="0 0 1005 613" font-family="Liberation Sans, sans-serif">
<defs><clipPath id="lc"><rect x="0" y="213" width="512" height="212"/></clipPath></defs>
<g clip-path="url(#lc)">
<rect x="59.5" y="235.6" width="445.1" height="161.50000000000003" fill="#fff"/>
<line x1="104.0" y1="235.6" x2="104.0" y2="397.1" stroke="#c8c8c8" stroke-width="1" stroke-dasharray="1.1,2.1"/>
<line x1="193.0" y1="235.6" x2="193.0" y2="397.1" stroke="#c8c8c8" stroke-width="1" stroke-dasharray="1.1,2.1"/>
<line x1="282.1" y1="235.6" x2="282.1" y2="397.1" stroke="#c8c8c8" stroke-width="1" stroke-dasharray="1.1,2.1"/>
<line x1="371.1" y1="235.6" x2="371.1" y2="397.1" stroke="#c8c8c8" stroke-width="1" stroke-dasharray="1.1,2.1"/>
<line x1="460.1" y1="235.6" x2="460.1" y2="397.1" stroke="#c8c8c8" stroke-width="1" stroke-dasharray="1.1,2.1"/>
<line x1="59.5" y1="242.9" x2="504.6" y2="242.9" stroke="#c8c8c8" stroke-width="1" stroke-dasharray="1.1,2.1"/>
<line x1="59.5" y1="257.6" x2="504.6" y2="257.6" stroke="#c8c8c8" stroke-width="1" stroke-dasharray="1.1,2.1"/>
<line x1="59.5" y1="272.3" x2="504.6" y2="272.3" stroke="#c8c8c8" stroke-width="1" stroke-dasharray="1.1,2.1"/>
<line x1="59.5" y1="287.0" x2="504.6" y2="287.0" stroke="#c8c8c8" stroke-width="1" stroke-dasharray="1.1,2.1"/>
<line x1="59.5" y1="301.7" x2="504.6" y2="301.7" stroke="#c8c8c8" stroke-width="1" stroke-dasharray="1.1,2.1"/>
<line x1="59.5" y1="316.4" x2="504.6" y2="316.4" stroke="#c8c8c8" stroke-width="1" stroke-dasharray="1.1,2.1"/>
<line x1="59.5" y1="331.0" x2="504.6" y2="331.0" stroke="#c8c8c8" stroke-width="1" stroke-dasharray="1.1,2.1"/>
<line x1="59.5" y1="345.7" x2="504.6" y2="345.7" stroke="#c8c8c8" stroke-width="1" stroke-dasharray="1.1,2.1"/>
<line x1="59.5" y1="360.4" x2="504.6" y2="360.4" stroke="#c8c8c8" stroke-width="1" stroke-dasharray="1.1,2.1"/>
<line x1="59.5" y1="375.1" x2="504.6" y2="375.1" stroke="#c8c8c8" stroke-width="1" stroke-dasharray="1.1,2.1"/>
<line x1="59.5" y1="389.8" x2="504.6" y2="389.8" stroke="#c8c8c8" stroke-width="1" stroke-dasharray="1.1,2.1"/>
<line x1="148.5" y1="235.6" x2="148.5" y2="397.1" stroke="#c4c4c4" stroke-width="1"/>
<line x1="237.5" y1="235.6" x2="237.5" y2="397.1" stroke="#c4c4c4" stroke-width="1"/>
<line x1="326.6" y1="235.6" x2="326.6" y2="397.1" stroke="#c4c4c4" stroke-width="1"/>
<line x1="415.6" y1="235.6" x2="415.6" y2="397.1" stroke="#c4c4c4" stroke-width="1"/>
<line x1="59.5" y1="250.3" x2="504.6" y2="250.3" stroke="#c4c4c4" stroke-width="1"/>
<line x1="59.5" y1="265.0" x2="504.6" y2="265.0" stroke="#c4c4c4" stroke-width="1"/>
<line x1="59.5" y1="279.6" x2="504.6" y2="279.6" stroke="#c4c4c4" stroke-width="1"/>
<line x1="59.5" y1="294.3" x2="504.6" y2="294.3" stroke="#c4c4c4" stroke-width="1"/>
<line x1="59.5" y1="309.0" x2="504.6" y2="309.0" stroke="#c4c4c4" stroke-width="1"/>
<line x1="59.5" y1="323.7" x2="504.6" y2="323.7" stroke="#c4c4c4" stroke-width="1"/>
<line x1="59.5" y1="338.4" x2="504.6" y2="338.4" stroke="#c4c4c4" stroke-width="1"/>
<line x1="59.5" y1="353.1" x2="504.6" y2="353.1" stroke="#c4c4c4" stroke-width="1"/>
<line x1="59.5" y1="367.7" x2="504.6" y2="367.7" stroke="#808080" stroke-width="1.5"/>
<line x1="59.5" y1="382.4" x2="504.6" y2="382.4" stroke="#c4c4c4" stroke-width="1"/>
<path d="M59.5,367.7 L64.0,367.2 L68.4,366.7 L72.9,366.2 L77.3,365.7 L81.8,365.2 L86.2,364.6 L90.7,364.1 L95.1,363.7 L98.7,363.3 L99.6,363.3 L104.0,362.9 L108.5,362.6 L112.9,362.2 L117.4,361.9 L121.8,361.6 L126.3,361.4 L130.7,361.1 L135.2,360.8 L139.6,360.6 L144.1,360.3 L148.5,360.0 L153.0,359.8 L155.2,359.7 L157.4,359.5 L161.9,359.3 L166.3,359.0 L170.8,358.8 L175.2,358.5 L179.7,358.3 L184.1,358.0 L188.6,357.8 L193.0,357.6 L197.5,357.4 L201.9,357.2 L206.4,357.0 L210.8,356.8 L215.3,356.6 L219.7,356.4 L224.2,356.3 L228.6,356.1 L233.1,356.0 L237.5,355.8 L242.0,355.7 L246.4,355.6 L250.9,355.5 L255.3,355.4 L259.8,355.4 L264.2,355.3 L268.7,355.2 L273.1,355.1 L277.6,355.0 L282.1,355.0 L286.5,354.9 L291.0,354.8 L295.4,354.7 L299.9,354.6 L304.3,354.6 L308.8,354.5 L313.2,354.4 L317.7,354.3 L322.1,354.3 L326.6,354.2 L331.0,354.2 L335.5,354.1 L339.9,354.1 L344.4,354.0 L348.8,354.0 L353.3,353.9 L357.7,353.9 L362.2,353.8 L366.6,353.8 L371.1,353.7 L375.5,353.7 L380.0,353.7 L384.4,353.6 L388.9,353.6 L393.3,353.6 L397.8,353.5 L402.2,353.5 L406.7,353.5 L411.1,353.5 L415.6,353.5 L420.0,353.5 L424.5,353.5 L428.9,353.5 L433.4,353.5 L437.8,353.5 L442.3,353.5 L446.7,353.5 L451.2,353.5 L455.6,353.5 L460.1,353.5 L464.5,353.6 L469.0,353.6 L473.4,353.6 L477.9,353.6 L482.3,353.6 L486.8,353.7 L491.2,353.7 L495.7,353.7 L500.1,353.8 L504.6,353.8" fill="none" stroke="#0000ff" stroke-width="1.7"/>
<path d="M59.5,367.7 L64.0,368.5 L68.4,369.2 L72.9,369.9 L77.3,370.4 L81.8,370.8 L86.2,371.1 L90.7,371.4 L95.1,371.7 L99.6,371.9 L104.0,372.2 L108.5,372.4 L112.9,372.7 L117.4,373.1 L121.8,373.4 L126.3,373.8 L130.7,374.1 L135.2,374.5 L139.6,374.9 L144.1,375.2 L148.5,375.6 L153.0,375.9 L155.2,376.1 L157.4,376.3 L161.9,376.6 L166.3,376.9 L170.8,377.2 L175.2,377.5 L179.7,377.8 L184.1,378.1 L188.6,378.4 L193.0,378.7 L197.5,379.1 L201.9,379.4 L206.4,379.7 L210.8,380.0 L215.3,380.4 L219.7,380.7 L224.2,381.0 L228.6,381.3 L233.1,381.6 L237.5,381.8 L242.0,382.1 L246.4,382.3 L250.9,382.5 L255.3,382.7 L259.8,382.9 L264.2,383.1 L268.7,383.3 L273.1,383.4 L277.6,383.7 L282.1,383.9 L286.5,384.2 L291.0,384.5 L295.4,384.9 L299.9,385.2 L304.3,385.4 L308.8,385.5 L313.2,385.4 L317.7,385.1 L322.1,384.9 L326.6,384.8 L331.0,384.8 L335.5,384.8 L339.9,384.9 L344.4,385.0 L348.8,385.1 L353.3,385.3 L357.7,385.4 L362.2,385.5 L366.6,385.6 L371.1,385.6 L375.5,385.7 L380.0,385.8 L384.4,385.8 L388.9,385.9 L393.3,385.9 L397.8,386.0 L402.2,386.0 L406.7,386.1 L411.1,386.1 L415.6,386.1 L420.0,386.1 L424.5,386.1 L428.9,386.1 L433.4,386.1 L437.8,386.1 L442.3,386.1 L446.7,386.1 L451.2,386.1 L455.6,386.1 L460.1,386.1 L464.5,386.1 L469.0,386.1 L473.4,386.1 L477.9,386.1 L482.3,386.1 L486.8,386.1 L491.2,386.1 L495.7,386.1 L500.1,386.1 L504.6,386.1" fill="none" stroke="#ff00ff" stroke-width="1.7"/>
<path d="M59.5,367.7 L64.0,365.5 L68.4,363.3 L72.9,361.0 L77.3,358.6 L81.8,356.2 L86.2,353.6 L90.7,350.9 L95.1,348.3 L99.6,345.6 L104.0,342.9 L108.5,340.4 L112.9,337.9 L117.4,335.6 L121.8,333.3 L126.3,331.0 L130.7,328.8 L135.2,326.6 L139.6,324.4 L144.1,322.3 L148.5,320.2 L153.0,318.1 L157.4,316.1 L161.9,314.0 L166.3,311.9 L170.8,309.9 L175.2,307.9 L179.7,305.9 L184.1,303.9 L188.6,302.0 L193.0,300.2 L197.5,298.4 L201.9,296.6 L206.4,294.9 L210.8,293.2 L215.3,291.5 L219.7,289.9 L224.2,288.3 L228.6,286.7 L233.1,285.2 L237.5,283.8 L242.0,282.3 L246.4,281.0 L250.9,279.7 L255.3,278.4 L259.8,277.1 L264.2,275.9 L268.7,274.6 L273.1,273.5 L277.6,272.3 L282.1,271.1 L286.5,270.0 L291.0,268.8 L295.4,267.7 L299.9,266.6 L304.3,265.5 L308.8,264.4 L313.2,263.4 L317.7,262.4 L322.1,261.4 L326.6,260.6 L331.0,259.7 L335.5,258.9 L339.9,258.1 L344.4,257.3 L348.8,256.6 L353.3,255.9 L357.7,255.2 L362.2,254.6 L366.6,254.0 L371.1,253.5 L375.5,253.0 L380.0,252.6 L384.4,252.1 L388.9,251.7 L393.3,251.3 L397.8,250.9 L402.2,250.6 L406.7,250.3 L411.1,250.0 L415.6,249.8 L420.0,249.7 L424.5,249.5 L428.9,249.4 L433.4,249.2 L437.8,249.1 L442.3,249.0 L446.7,248.9 L451.2,248.9 L455.6,248.8 L460.1,248.8 L464.5,248.8 L469.0,248.9 L473.4,249.0 L477.9,249.1 L482.3,249.2 L486.8,249.4 L491.2,249.6 L495.7,249.8 L500.1,250.0 L504.6,250.3" fill="none" stroke="#308030" stroke-width="1.7"/>
<path d="M59.5,367.7 L64.0,365.4 L68.4,363.1 L72.9,360.7 L77.3,358.2 L81.8,355.7 L86.2,353.0 L90.7,350.3 L95.1,347.6 L99.6,344.9 L104.0,342.3 L108.5,339.7 L112.9,337.2 L117.4,334.8 L121.8,332.5 L126.3,330.2 L130.7,327.9 L135.2,325.7 L139.6,323.5 L144.1,321.3 L148.5,319.1 L153.0,317.0 L157.4,314.9 L161.9,312.7 L166.3,310.6 L170.8,308.5 L175.2,306.4 L179.7,304.3 L184.1,302.3 L188.6,300.3 L193.0,298.4 L197.5,296.6 L201.9,294.8 L206.4,293.1 L210.8,291.4 L215.3,289.7 L219.7,288.1 L224.2,286.5 L228.6,284.9 L233.1,283.4 L237.5,282.0 L242.0,280.6 L246.4,279.2 L250.9,277.9 L255.3,276.6 L259.8,275.3 L264.2,274.1 L268.7,272.9 L273.1,271.7 L277.6,270.5 L282.1,269.4 L286.5,268.2 L291.0,267.0 L295.4,265.9 L299.9,264.7 L304.3,263.6 L308.8,262.5 L313.2,261.5 L317.7,260.5 L322.1,259.5 L326.6,258.7 L331.0,257.8 L335.5,257.0 L339.9,256.2 L344.4,255.5 L348.8,254.7 L353.3,254.1 L357.7,253.4 L362.2,252.8 L366.6,252.3 L371.1,251.8 L375.5,251.3 L380.0,250.8 L384.4,250.4 L388.9,249.9 L393.3,249.5 L397.8,249.2 L402.2,248.8 L406.7,248.5 L411.1,248.3 L415.6,248.1 L420.0,247.9 L424.5,247.7 L428.9,247.6 L433.4,247.4 L437.8,247.3 L442.3,247.1 L446.7,247.0 L451.2,247.0 L455.6,246.9 L460.1,246.9 L464.5,246.9 L469.0,247.0 L473.4,247.0 L477.9,247.2 L482.3,247.3 L486.8,247.5 L491.2,247.6 L495.7,247.9 L500.1,248.1 L504.6,248.4" fill="none" stroke="#ff0000" stroke-width="1.7"/>
<rect x="59.5" y="235.6" width="445.1" height="161.50000000000003" fill="none" stroke="#000" stroke-width="1.2"/>
<line x1="56.5" y1="235.6" x2="59.5" y2="235.6" stroke="#000" stroke-width="1"/>
<text x="55.3" y="239.4" text-anchor="end" font-size="8.7" fill="#101010">90</text>
<line x1="56.5" y1="250.3" x2="59.5" y2="250.3" stroke="#000" stroke-width="1"/>
<text x="55.3" y="254.1" text-anchor="end" font-size="8.7" fill="#101010">80</text>
<line x1="56.5" y1="265.0" x2="59.5" y2="265.0" stroke="#000" stroke-width="1"/>
<text x="55.3" y="268.8" text-anchor="end" font-size="8.7" fill="#101010">70</text>
<line x1="56.5" y1="279.6" x2="59.5" y2="279.6" stroke="#000" stroke-width="1"/>
<text x="55.3" y="283.4" text-anchor="end" font-size="8.7" fill="#101010">60</text>
<line x1="56.5" y1="294.3" x2="59.5" y2="294.3" stroke="#000" stroke-width="1"/>
<text x="55.3" y="298.1" text-anchor="end" font-size="8.7" fill="#101010">50</text>
<line x1="56.5" y1="309.0" x2="59.5" y2="309.0" stroke="#000" stroke-width="1"/>
<text x="55.3" y="312.8" text-anchor="end" font-size="8.7" fill="#101010">40</text>
<line x1="56.5" y1="323.7" x2="59.5" y2="323.7" stroke="#000" stroke-width="1"/>
<text x="55.3" y="327.5" text-anchor="end" font-size="8.7" fill="#101010">30</text>
<line x1="56.5" y1="338.4" x2="59.5" y2="338.4" stroke="#000" stroke-width="1"/>
<text x="55.3" y="342.2" text-anchor="end" font-size="8.7" fill="#101010">20</text>
<line x1="56.5" y1="353.1" x2="59.5" y2="353.1" stroke="#000" stroke-width="1"/>
<text x="55.3" y="356.9" text-anchor="end" font-size="8.7" fill="#101010">10</text>
<line x1="56.5" y1="367.7" x2="59.5" y2="367.7" stroke="#000" stroke-width="1"/>
<text x="55.3" y="371.5" text-anchor="end" font-size="8.7" fill="#101010">0</text>
<line x1="56.5" y1="382.4" x2="59.5" y2="382.4" stroke="#000" stroke-width="1"/>
<text x="55.3" y="386.2" text-anchor="end" font-size="8.7" fill="#101010">-10</text>
<line x1="56.5" y1="397.1" x2="59.5" y2="397.1" stroke="#000" stroke-width="1"/>
<text x="55.3" y="400.9" text-anchor="end" font-size="8.7" fill="#101010">-20</text>
<line x1="59.5" y1="397.1" x2="59.5" y2="400.1" stroke="#000" stroke-width="1"/>
<text x="58.7" y="409.2" text-anchor="middle" font-size="8.7" letter-spacing="-0.25" fill="#101010">0</text>
<line x1="148.5" y1="397.1" x2="148.5" y2="400.1" stroke="#000" stroke-width="1"/>
<text x="147.7" y="409.2" text-anchor="middle" font-size="8.7" letter-spacing="-0.25" fill="#101010">0.01</text>
<line x1="237.5" y1="397.1" x2="237.5" y2="400.1" stroke="#000" stroke-width="1"/>
<text x="236.7" y="409.2" text-anchor="middle" font-size="8.7" letter-spacing="-0.25" fill="#101010">0.02</text>
<line x1="326.6" y1="397.1" x2="326.6" y2="400.1" stroke="#000" stroke-width="1"/>
<text x="325.8" y="409.2" text-anchor="middle" font-size="8.7" letter-spacing="-0.25" fill="#101010">0.03</text>
<line x1="415.6" y1="397.1" x2="415.6" y2="400.1" stroke="#000" stroke-width="1"/>
<text x="414.8" y="409.2" text-anchor="middle" font-size="8.7" letter-spacing="-0.25" fill="#101010">0.04</text>
<line x1="504.6" y1="397.1" x2="504.6" y2="400.1" stroke="#000" stroke-width="1"/>
<text x="503.8" y="409.2" text-anchor="middle" font-size="8.7" letter-spacing="-0.25" fill="#101010">0.05</text>
<text x="282" y="228.8" text-anchor="middle" font-size="15" fill="#000">Relative Displacement from Measure</text>
<text x="281.5" y="420.6" text-anchor="middle" font-size="10.5" fill="#000">Time</text>
<clipPath id="ytc"><rect x="20" y="226.3" width="25" height="198.7"/></clipPath><g clip-path="url(#ytc)"><text transform="translate(38.4,428) rotate(-90)" font-size="9.7" fill="#000">Relative Displacement</text><text transform="translate(38.4,326.5) rotate(-90)" font-size="9.7" fill="#000" letter-spacing="0.55">(Relative to t=0.000000)</text></g>
<rect x="403.85" y="270.25" width="98.0" height="61.3" rx="1" fill="#fff" stroke="#383838" stroke-width="1.5"/>
<line x1="407.3" y1="279.4" x2="445.3" y2="279.4" stroke="#ff0000" stroke-width="1.6"/>
<text x="448" y="282.5" font-size="8.6" fill="#ff0000">Mag.N(2968)</text>
<line x1="407.3" y1="293.7" x2="445.3" y2="293.7" stroke="#0000ff" stroke-width="1.6"/>
<text x="448" y="296.8" font-size="8.6" fill="#0000ff">X.N(2968)</text>
<line x1="407.3" y1="308.0" x2="445.3" y2="308.0" stroke="#ff00ff" stroke-width="1.6"/>
<text x="448" y="311.1" font-size="8.6" fill="#ff00ff">Y.N(2968)</text>
<line x1="407.3" y1="322.3" x2="445.3" y2="322.3" stroke="#308030" stroke-width="1.6"/>
<text x="448" y="325.4" font-size="8.6" fill="#308030">Z.N(2968)</text>
</g>
<rect x="515.5" y="213.6" width="486.3" height="211.6" fill="none" stroke="#30f4f4" stroke-width="1.25"/>
<rect x="547.5" y="235.5" width="444.9" height="161.8" fill="#fff"/>
<line x1="592.0" y1="235.5" x2="592.0" y2="397.3" stroke="#c8c8c8" stroke-width="1" stroke-dasharray="1.1,2.1"/>
<line x1="681.0" y1="235.5" x2="681.0" y2="397.3" stroke="#c8c8c8" stroke-width="1" stroke-dasharray="1.1,2.1"/>
<line x1="770.0" y1="235.5" x2="770.0" y2="397.3" stroke="#c8c8c8" stroke-width="1" stroke-dasharray="1.1,2.1"/>
<line x1="858.9" y1="235.5" x2="858.9" y2="397.3" stroke="#c8c8c8" stroke-width="1" stroke-dasharray="1.1,2.1"/>
<line x1="947.9" y1="235.5" x2="947.9" y2="397.3" stroke="#c8c8c8" stroke-width="1" stroke-dasharray="1.1,2.1"/>
<line x1="547.5" y1="242.9" x2="992.4" y2="242.9" stroke="#c8c8c8" stroke-width="1" stroke-dasharray="1.1,2.1"/>
<line x1="547.5" y1="257.6" x2="992.4" y2="257.6" stroke="#c8c8c8" stroke-width="1" stroke-dasharray="1.1,2.1"/>
<line x1="547.5" y1="272.3" x2="992.4" y2="272.3" stroke="#c8c8c8" stroke-width="1" stroke-dasharray="1.1,2.1"/>
<line x1="547.5" y1="287.0" x2="992.4" y2="287.0" stroke="#c8c8c8" stroke-width="1" stroke-dasharray="1.1,2.1"/>
<line x1="547.5" y1="301.7" x2="992.4" y2="301.7" stroke="#c8c8c8" stroke-width="1" stroke-dasharray="1.1,2.1"/>
<line x1="547.5" y1="316.4" x2="992.4" y2="316.4" stroke="#c8c8c8" stroke-width="1" stroke-dasharray="1.1,2.1"/>
<line x1="547.5" y1="331.1" x2="992.4" y2="331.1" stroke="#c8c8c8" stroke-width="1" stroke-dasharray="1.1,2.1"/>
<line x1="547.5" y1="345.8" x2="992.4" y2="345.8" stroke="#c8c8c8" stroke-width="1" stroke-dasharray="1.1,2.1"/>
<line x1="547.5" y1="360.5" x2="992.4" y2="360.5" stroke="#c8c8c8" stroke-width="1" stroke-dasharray="1.1,2.1"/>
<line x1="547.5" y1="375.2" x2="992.4" y2="375.2" stroke="#c8c8c8" stroke-width="1" stroke-dasharray="1.1,2.1"/>
<line x1="547.5" y1="389.9" x2="992.4" y2="389.9" stroke="#c8c8c8" stroke-width="1" stroke-dasharray="1.1,2.1"/>
<line x1="636.5" y1="235.5" x2="636.5" y2="397.3" stroke="#c4c4c4" stroke-width="1"/>
<line x1="725.5" y1="235.5" x2="725.5" y2="397.3" stroke="#c4c4c4" stroke-width="1"/>
<line x1="814.4" y1="235.5" x2="814.4" y2="397.3" stroke="#c4c4c4" stroke-width="1"/>
<line x1="903.4" y1="235.5" x2="903.4" y2="397.3" stroke="#c4c4c4" stroke-width="1"/>
<line x1="547.5" y1="250.2" x2="992.4" y2="250.2" stroke="#c4c4c4" stroke-width="1"/>
<line x1="547.5" y1="264.9" x2="992.4" y2="264.9" stroke="#c4c4c4" stroke-width="1"/>
<line x1="547.5" y1="279.6" x2="992.4" y2="279.6" stroke="#c4c4c4" stroke-width="1"/>
<line x1="547.5" y1="294.3" x2="992.4" y2="294.3" stroke="#c4c4c4" stroke-width="1"/>
<line x1="547.5" y1="309.0" x2="992.4" y2="309.0" stroke="#c4c4c4" stroke-width="1"/>
<line x1="547.5" y1="323.8" x2="992.4" y2="323.8" stroke="#c4c4c4" stroke-width="1"/>
<line x1="547.5" y1="338.5" x2="992.4" y2="338.5" stroke="#c4c4c4" stroke-width="1"/>
<line x1="547.5" y1="353.2" x2="992.4" y2="353.2" stroke="#c4c4c4" stroke-width="1"/>
<line x1="547.5" y1="367.9" x2="992.4" y2="367.9" stroke="#808080" stroke-width="1.5"/>
<line x1="547.5" y1="382.6" x2="992.4" y2="382.6" stroke="#c4c4c4" stroke-width="1"/>
<path d="M547.5,367.9 L551.9,367.4 L556.4,366.8 L560.8,366.3 L565.3,365.8 L569.7,365.3 L574.2,364.8 L578.6,364.3 L583.1,363.8 L586.7,363.5 L587.5,363.4 L592.0,363.0 L596.4,362.7 L600.9,362.4 L605.3,362.1 L609.8,361.8 L614.2,361.5 L618.7,361.2 L623.1,361.0 L627.6,360.7 L632.0,360.4 L636.5,360.2 L640.9,359.9 L643.2,359.8 L645.4,359.7 L649.8,359.4 L654.3,359.1 L658.7,358.9 L663.2,358.6 L667.6,358.4 L672.1,358.2 L676.5,357.9 L681.0,357.7 L685.4,357.5 L689.9,357.3 L694.3,357.1 L698.8,356.9 L703.2,356.7 L707.7,356.6 L712.1,356.4 L716.6,356.2 L721.0,356.1 L725.5,356.0 L729.9,355.9 L734.4,355.8 L738.8,355.7 L743.3,355.6 L747.7,355.5 L752.2,355.4 L756.6,355.3 L761.1,355.2 L765.5,355.2 L770.0,355.1 L774.4,355.0 L778.8,354.9 L783.3,354.8 L787.7,354.8 L792.2,354.7 L796.6,354.6 L801.1,354.5 L805.5,354.5 L810.0,354.4 L814.4,354.3 L818.9,354.3 L823.3,354.2 L827.8,354.2 L832.2,354.1 L836.7,354.1 L841.1,354.0 L845.6,354.0 L850.0,353.9 L854.5,353.9 L858.9,353.9 L863.4,353.8 L867.8,353.8 L872.3,353.7 L876.7,353.7 L881.2,353.7 L885.6,353.7 L890.1,353.6 L894.5,353.6 L899.0,353.6 L903.4,353.6 L907.9,353.6 L912.3,353.6 L916.8,353.6 L921.2,353.6 L925.7,353.6 L930.1,353.6 L934.6,353.6 L939.0,353.6 L943.5,353.6 L947.9,353.7 L952.4,353.7 L956.8,353.7 L961.3,353.7 L965.7,353.7 L970.2,353.7 L974.6,353.8 L979.1,353.8 L983.5,353.8 L988.0,353.9 L992.4,353.9" fill="none" stroke="#0000ff" stroke-width="1.7"/>
<path d="M547.5,367.9 L551.9,368.7 L556.4,369.4 L560.8,370.0 L565.3,370.5 L569.7,370.9 L574.2,371.3 L578.6,371.5 L583.1,371.8 L587.5,372.1 L592.0,372.3 L596.4,372.6 L600.9,372.9 L605.3,373.2 L609.8,373.6 L614.2,373.9 L618.7,374.3 L623.1,374.7 L627.6,375.0 L632.0,375.4 L636.5,375.8 L640.9,376.1 L643.2,376.3 L645.4,376.4 L649.8,376.8 L654.3,377.1 L658.7,377.4 L663.2,377.7 L667.6,378.0 L672.1,378.3 L676.5,378.6 L681.0,378.9 L685.4,379.2 L689.9,379.6 L694.3,379.9 L698.8,380.2 L703.2,380.5 L707.7,380.9 L712.1,381.2 L716.6,381.5 L721.0,381.7 L725.5,382.0 L729.9,382.2 L734.4,382.5 L738.8,382.7 L743.3,382.9 L747.7,383.0 L752.2,383.2 L756.6,383.4 L761.1,383.6 L765.5,383.8 L770.0,384.1 L774.4,384.3 L778.8,384.7 L783.3,385.0 L787.7,385.4 L792.2,385.6 L796.6,385.7 L801.1,385.6 L805.5,385.3 L810.0,385.1 L814.4,384.9 L818.9,385.0 L823.3,385.0 L827.8,385.1 L832.2,385.2 L836.7,385.3 L841.1,385.4 L845.6,385.5 L850.0,385.7 L854.5,385.8 L858.9,385.8 L863.4,385.9 L867.8,385.9 L872.3,386.0 L876.7,386.1 L881.2,386.1 L885.6,386.2 L890.1,386.2 L894.5,386.2 L899.0,386.3 L903.4,386.3 L907.9,386.3 L912.3,386.3 L916.8,386.3 L921.2,386.3 L925.7,386.3 L930.1,386.3 L934.6,386.3 L939.0,386.3 L943.5,386.3 L947.9,386.3 L952.4,386.3 L956.8,386.3 L961.3,386.3 L965.7,386.3 L970.2,386.3 L974.6,386.3 L979.1,386.3 L983.5,386.3 L988.0,386.3 L992.4,386.3" fill="none" stroke="#ff00ff" stroke-width="1.7"/>
<path d="M547.5,367.9 L551.9,365.7 L556.4,363.4 L560.8,361.1 L565.3,358.8 L569.7,356.3 L574.2,353.7 L578.6,351.0 L583.1,348.4 L587.5,345.7 L592.0,343.0 L596.4,340.5 L600.9,338.0 L605.3,335.7 L609.8,333.4 L614.2,331.1 L618.7,328.9 L623.1,326.7 L627.6,324.5 L632.0,322.4 L636.5,320.3 L640.9,318.2 L645.4,316.1 L649.8,314.0 L654.3,312.0 L658.7,309.9 L663.2,307.9 L667.6,305.9 L672.1,304.0 L676.5,302.1 L681.0,300.2 L685.4,298.4 L689.9,296.7 L694.3,294.9 L698.8,293.2 L703.2,291.5 L707.7,289.9 L712.1,288.3 L716.6,286.7 L721.0,285.2 L725.5,283.7 L729.9,282.3 L734.4,281.0 L738.8,279.6 L743.3,278.3 L747.7,277.1 L752.2,275.8 L756.6,274.6 L761.1,273.4 L765.5,272.3 L770.0,271.1 L774.4,269.9 L778.8,268.8 L783.3,267.6 L787.7,266.5 L792.2,265.4 L796.6,264.3 L801.1,263.3 L805.5,262.3 L810.0,261.4 L814.4,260.5 L818.9,259.7 L823.3,258.8 L827.8,258.0 L832.2,257.3 L836.7,256.5 L841.1,255.8 L845.6,255.1 L850.0,254.5 L854.5,254.0 L858.9,253.4 L863.4,253.0 L867.8,252.5 L872.3,252.0 L876.7,251.6 L881.2,251.2 L885.6,250.8 L890.1,250.5 L894.5,250.2 L899.0,250.0 L903.4,249.8 L907.9,249.6 L912.3,249.5 L916.8,249.3 L921.2,249.2 L925.7,249.1 L930.1,248.9 L934.6,248.9 L939.0,248.8 L943.5,248.8 L947.9,248.7 L952.4,248.8 L956.8,248.8 L961.3,248.9 L965.7,249.0 L970.2,249.1 L974.6,249.3 L979.1,249.5 L983.5,249.7 L988.0,249.9 L992.4,250.2" fill="none" stroke="#308030" stroke-width="1.7"/>
<path d="M547.5,367.9 L551.9,365.6 L556.4,363.2 L560.8,360.8 L565.3,358.3 L569.7,355.8 L574.2,353.1 L578.6,350.4 L583.1,347.7 L587.5,345.0 L592.0,342.4 L596.4,339.8 L600.9,337.3 L605.3,334.9 L609.8,332.5 L614.2,330.2 L618.7,328.0 L623.1,325.7 L627.6,323.5 L632.0,321.3 L636.5,319.2 L640.9,317.0 L645.4,314.9 L649.8,312.8 L654.3,310.7 L658.7,308.5 L663.2,306.4 L667.6,304.4 L672.1,302.3 L676.5,300.3 L681.0,298.5 L685.4,296.6 L689.9,294.8 L694.3,293.1 L698.8,291.4 L703.2,289.7 L707.7,288.1 L712.1,286.5 L716.6,284.9 L721.0,283.4 L725.5,282.0 L729.9,280.6 L734.4,279.2 L738.8,277.9 L743.3,276.6 L747.7,275.3 L752.2,274.1 L756.6,272.9 L761.1,271.7 L765.5,270.5 L770.0,269.3 L774.4,268.2 L778.8,267.0 L783.3,265.8 L787.7,264.7 L792.2,263.6 L796.6,262.5 L801.1,261.4 L805.5,260.4 L810.0,259.5 L814.4,258.6 L818.9,257.8 L823.3,257.0 L827.8,256.2 L832.2,255.4 L836.7,254.7 L841.1,254.0 L845.6,253.3 L850.0,252.7 L854.5,252.2 L858.9,251.7 L863.4,251.2 L867.8,250.7 L872.3,250.3 L876.7,249.9 L881.2,249.5 L885.6,249.1 L890.1,248.8 L894.5,248.5 L899.0,248.2 L903.4,248.0 L907.9,247.8 L912.3,247.7 L916.8,247.5 L921.2,247.3 L925.7,247.2 L930.1,247.1 L934.6,247.0 L939.0,246.9 L943.5,246.8 L947.9,246.8 L952.4,246.8 L956.8,246.9 L961.3,247.0 L965.7,247.1 L970.2,247.2 L974.6,247.4 L979.1,247.6 L983.5,247.8 L988.0,248.0 L992.4,248.3" fill="none" stroke="#ff0000" stroke-width="1.7"/>
<rect x="547.5" y="235.5" width="444.9" height="161.8" fill="none" stroke="#000" stroke-width="1.2"/>
<line x1="544.5" y1="235.5" x2="547.5" y2="235.5" stroke="#000" stroke-width="1"/>
<text x="543.3" y="239.3" text-anchor="end" font-size="8.7" fill="#101010">90</text>
<line x1="544.5" y1="250.2" x2="547.5" y2="250.2" stroke="#000" stroke-width="1"/>
<text x="543.3" y="254.0" text-anchor="end" font-size="8.7" fill="#101010">80</text>
<line x1="544.5" y1="264.9" x2="547.5" y2="264.9" stroke="#000" stroke-width="1"/>
<text x="543.3" y="268.7" text-anchor="end" font-size="8.7" fill="#101010">70</text>
<line x1="544.5" y1="279.6" x2="547.5" y2="279.6" stroke="#000" stroke-width="1"/>
<text x="543.3" y="283.4" text-anchor="end" font-size="8.7" fill="#101010">60</text>
<line x1="544.5" y1="294.3" x2="547.5" y2="294.3" stroke="#000" stroke-width="1"/>
<text x="543.3" y="298.1" text-anchor="end" font-size="8.7" fill="#101010">50</text>
<line x1="544.5" y1="309.0" x2="547.5" y2="309.0" stroke="#000" stroke-width="1"/>
<text x="543.3" y="312.8" text-anchor="end" font-size="8.7" fill="#101010">40</text>
<line x1="544.5" y1="323.8" x2="547.5" y2="323.8" stroke="#000" stroke-width="1"/>
<text x="543.3" y="327.6" text-anchor="end" font-size="8.7" fill="#101010">30</text>
<line x1="544.5" y1="338.5" x2="547.5" y2="338.5" stroke="#000" stroke-width="1"/>
<text x="543.3" y="342.3" text-anchor="end" font-size="8.7" fill="#101010">20</text>
<line x1="544.5" y1="353.2" x2="547.5" y2="353.2" stroke="#000" stroke-width="1"/>
<text x="543.3" y="357.0" text-anchor="end" font-size="8.7" fill="#101010">10</text>
<line x1="544.5" y1="367.9" x2="547.5" y2="367.9" stroke="#000" stroke-width="1"/>
<text x="543.3" y="371.7" text-anchor="end" font-size="8.7" fill="#101010">0</text>
<line x1="544.5" y1="382.6" x2="547.5" y2="382.6" stroke="#000" stroke-width="1"/>
<text x="543.3" y="386.4" text-anchor="end" font-size="8.7" fill="#101010">-10</text>
<line x1="544.5" y1="397.3" x2="547.5" y2="397.3" stroke="#000" stroke-width="1"/>
<text x="543.3" y="401.1" text-anchor="end" font-size="8.7" fill="#101010">-20</text>
<line x1="547.5" y1="397.3" x2="547.5" y2="400.3" stroke="#000" stroke-width="1"/>
<text x="546.7" y="409.4" text-anchor="middle" font-size="8.7" letter-spacing="-0.25" fill="#101010">0</text>
<line x1="636.5" y1="397.3" x2="636.5" y2="400.3" stroke="#000" stroke-width="1"/>
<text x="635.7" y="409.4" text-anchor="middle" font-size="8.7" letter-spacing="-0.25" fill="#101010">0.01</text>
<line x1="725.5" y1="397.3" x2="725.5" y2="400.3" stroke="#000" stroke-width="1"/>
<text x="724.7" y="409.4" text-anchor="middle" font-size="8.7" letter-spacing="-0.25" fill="#101010">0.02</text>
<line x1="814.4" y1="397.3" x2="814.4" y2="400.3" stroke="#000" stroke-width="1"/>
<text x="813.6" y="409.4" text-anchor="middle" font-size="8.7" letter-spacing="-0.25" fill="#101010">0.03</text>
<line x1="903.4" y1="397.3" x2="903.4" y2="400.3" stroke="#000" stroke-width="1"/>
<text x="902.6" y="409.4" text-anchor="middle" font-size="8.7" letter-spacing="-0.25" fill="#101010">0.04</text>
<line x1="992.4" y1="397.3" x2="992.4" y2="400.3" stroke="#000" stroke-width="1"/>
<text x="991.6" y="409.4" text-anchor="middle" font-size="8.7" letter-spacing="-0.25" fill="#101010">0.05</text>
<text x="769" y="228.8" text-anchor="middle" font-size="15" fill="#000">Relative Displacement from reldisp Function</text>
<text x="769" y="420.8" text-anchor="middle" font-size="10.5" fill="#000">X Axis</text>
<text transform="translate(525.8,330.3) rotate(-90)" font-size="11" fill="#000">Y Axis</text>
<rect x="924.95" y="270.15" width="64.6" height="61.3" rx="1" fill="#fff" stroke="#383838" stroke-width="1.5"/>
<line x1="928.4000000000001" y1="279.3" x2="966.6" y2="279.3" stroke="#ff0000" stroke-width="1.6"/>
<text x="968.9" y="282.4" font-size="8.6" fill="#ff0000">mag</text>
<line x1="928.4000000000001" y1="293.6" x2="966.6" y2="293.6" stroke="#0000ff" stroke-width="1.6"/>
<text x="968.9" y="296.7" font-size="8.6" fill="#0000ff">x</text>
<line x1="928.4000000000001" y1="307.9" x2="966.6" y2="307.9" stroke="#ff00ff" stroke-width="1.6"/>
<text x="968.9" y="311.0" font-size="8.6" fill="#ff00ff">y</text>
<line x1="928.4000000000001" y1="322.2" x2="966.6" y2="322.2" stroke="#308030" stroke-width="1.6"/>
<text x="968.9" y="325.3" font-size="8.6" fill="#308030">z</text>
</svg>
<svg style="position:absolute;left:0;top:420px" width="1005" height="36" viewBox="0 420 1005 36" font-family="Liberation Sans, sans-serif">
<defs>
<radialGradient id="bg" cx="0.5" cy="0.25" r="0.8"><stop offset="0" stop-color="#b0b4f0"/><stop offset="0.45" stop-color="#6a6eb8"/><stop offset="1" stop-color="#3e4188"/></radialGradient>
<linearGradient id="hl" x1="0" y1="0" x2="0" y2="1"><stop offset="0" stop-color="#fff" stop-opacity="0.45"/><stop offset="1" stop-color="#fff" stop-opacity="0"/></linearGradient>
<linearGradient id="docg" x1="0" y1="0" x2="0" y2="1"><stop offset="0" stop-color="#f4f4f4"/><stop offset="1" stop-color="#c8c8c8"/></linearGradient>
<linearGradient id="gearg" x1="0" y1="0" x2="0" y2="1"><stop offset="0" stop-color="#f4f4f4"/><stop offset="1" stop-color="#d4d4d4"/></linearGradient>
</defs>
<rect x="5.2" y="429" width="2" height="2" fill="#101010"/><rect x="5.2" y="434.6" width="2" height="2" fill="#101010"/><rect x="5.2" y="440.1" width="2" height="2" fill="#101010"/><rect x="5.2" y="445.7" width="2" height="2" fill="#101010"/>
<rect x="46.1" y="429" width="2" height="2" fill="#101010"/><rect x="46.1" y="434.6" width="2" height="2" fill="#101010"/><rect x="46.1" y="440.1" width="2" height="2" fill="#101010"/><rect x="46.1" y="445.7" width="2" height="2" fill="#101010"/>
<rect x="86.9" y="429" width="2" height="2" fill="#101010"/><rect x="86.9" y="434.6" width="2" height="2" fill="#101010"/><rect x="86.9" y="440.1" width="2" height="2" fill="#101010"/><rect x="86.9" y="445.7" width="2" height="2" fill="#101010"/>
<rect x="329.2" y="429" width="2" height="2" fill="#101010"/><rect x="329.2" y="434.6" width="2" height="2" fill="#101010"/><rect x="329.2" y="440.1" width="2" height="2" fill="#101010"/><rect x="329.2" y="445.7" width="2" height="2" fill="#101010"/>
<rect x="451.4" y="429" width="2" height="2" fill="#101010"/><rect x="451.4" y="434.6" width="2" height="2" fill="#101010"/><rect x="451.4" y="440.1" width="2" height="2" fill="#101010"/><rect x="451.4" y="445.7" width="2" height="2" fill="#101010"/>
<line x1="207.5" y1="428" x2="207.5" y2="449" stroke="#8c8c8c" stroke-width="1"/>
<rect x="15" y="434" width="2.6" height="10.5" fill="#2020f0"/><rect x="18.2" y="431.5" width="2.8" height="13" fill="#f0f000"/><rect x="21.5" y="433" width="2.6" height="11.5" fill="#10d010"/><rect x="24.8" y="435.5" width="2.5" height="9" fill="#10e8f0"/>
<path d="M14,442.5 C17,438 19,436 21,436.3 C23.5,436.8 25,441.5 28.5,441.8" stroke="#f02020" stroke-width="1.6" fill="none"/>
<path d="M34,438 L38.9,438 L36.45,440.6 Z" fill="#000"/>
<path d="M55.5,432 V446.7 M53.5,444.5 H71" stroke="#202020" stroke-width="1.2" fill="none"/>
<path d="M56,444 C59,440 61.5,437.3 63.5,437.3 C66,437.3 66.5,443 68.5,443 L71,443" stroke="#f02828" stroke-width="1.6" fill="none"/>
<path d="M75,438 L79.4,438 L77.2,440.6 Z" fill="#000"/>
<path d="M94.5,436.3 H100.5 L102.8,438.6 V446.5 H94.5 Z" fill="#f8f8f8" stroke="#606060" stroke-width="0.9"/>
<g fill="#707070"><rect x="96" y="438" width="2" height="1"/><rect x="96" y="441" width="2" height="1"/><rect x="99.5" y="441" width="2" height="1"/><rect x="96" y="443.5" width="2" height="1.5"/><rect x="99.5" y="443.5" width="2" height="1.5"/></g>
<path d="M100.5,437 C104,435 107,432 110.5,429.5" stroke="#2a2af8" stroke-width="1.6" fill="none"/>
<path d="M94.5,435 C97,432.5 99.5,431.3 101,431.6 C103.5,432.5 104.5,437 107.5,438.3 C109.5,438.8 110.8,438 111.5,437.3" stroke="#f02020" stroke-width="1.6" fill="none"/>
<path d="M117,438.3 C121,437.5 125,436.5 127.5,434.5 C130,432.5 131.5,431 133,430" stroke="#2a2af8" stroke-width="1.6" fill="none"/>
<path d="M117,435 C119.5,432.3 121.5,431.3 123,431.6 C125.5,432.5 126.5,437 129.5,438.3 C131.5,438.8 133,438 134,437.3" stroke="#f02020" stroke-width="1.6" fill="none"/>
<text x="116.5" y="447" font-size="9.5" font-weight="bold" fill="#101010">fx</text>
<path d="M139.2,437.5 C142,441 146,444 154.8,445.8" stroke="#f02020" stroke-width="1.6" fill="none"/>
<path d="M151.5,429.3 h2.6 v2.4 h2.4 v2.6 h-2.4 v2.4 h-2.6 v-2.4 h-2.4 v-2.6 h2.4 Z" fill="#50c020" stroke="#2a7a10" stroke-width="0.6"/>
<circle cx="170.2" cy="437.8" r="8.2" fill="#f2f2f6" stroke="#e2e4ee" stroke-width="0.8"/><path d="M169,434 L175,434.5 M170,438 L172,445 M175,434.5 L172,445 M170,438 L168,444" stroke="#d0d4ec" stroke-width="0.8" fill="none"/>
<rect x="184.4" y="437" width="15.7" height="2" fill="#f00000"/>
<path d="M185,445.5 C188,442 190.5,439.3 192.5,439.5 C194.5,439.8 195.5,444.5 198,444.8 L200,445" stroke="#7078b8" stroke-width="1.5" fill="none"/>
<path d="M214.5,437.7 L218.5,434.6 M228,441.6 L231.5,439.7" stroke="#f02828" stroke-width="1.6"/>
<path d="M218.6,433.6 C221.5,432.5 223,436 224,438 C225,440 226,441.8 227.4,441.6" stroke="#7a7af0" stroke-width="1.6" fill="none"/>
<path d="M218.6,430 V446 M227.4,430 V446" stroke="#404040" stroke-width="1"/>
<path d="M219,436 L221.6,438.2 L219,440.4 Z M227,436 L224.4,438.2 L227,440.4 Z" fill="#000"/>
<path d="M245.3,437.6 L243.28,430.07 A7.8,7.8 0 0 1 247.32,430.07 Z" fill="#00ffff" stroke="#00ffff" stroke-width="0.3"/><path d="M245.3,437.6 L247.32,430.07 A7.8,7.8 0 0 1 250.82,432.08 Z" fill="#00ff80" stroke="#00ff80" stroke-width="0.3"/><path d="M245.3,437.6 L250.82,432.08 A7.8,7.8 0 0 1 252.83,435.58 Z" fill="#00ff00" stroke="#00ff00" stroke-width="0.3"/><path d="M245.3,437.6 L252.83,435.58 A7.8,7.8 0 0 1 252.83,439.62 Z" fill="#80ff00" stroke="#80ff00" stroke-width="0.3"/><path d="M245.3,437.6 L252.83,439.62 A7.8,7.8 0 0 1 250.82,443.12 Z" fill="#ffff00" stroke="#ffff00" stroke-width="0.3"/><path d="M245.3,437.6 L250.82,443.12 A7.8,7.8 0 0 1 247.32,445.13 Z" fill="#ff8000" stroke="#ff8000" stroke-width="0.3"/><path d="M245.3,437.6 L247.32,445.13 A7.8,7.8 0 0 1 243.28,445.13 Z" fill="#ff0000" stroke="#ff0000" stroke-width="0.3"/><path d="M245.3,437.6 L243.28,445.13 A7.8,7.8 0 0 1 239.78,443.12 Z" fill="#ff0080" stroke="#ff0080" stroke-width="0.3"/><path d="M245.3,437.6 L239.78,443.12 A7.8,7.8 0 0 1 237.77,439.62 Z" fill="#ff00ff" stroke="#ff00ff" stroke-width="0.3"/><path d="M245.3,437.6 L237.77,439.62 A7.8,7.8 0 0 1 237.77,435.58 Z" fill="#8000ff" stroke="#8000ff" stroke-width="0.3"/><path d="M245.3,437.6 L237.77,435.58 A7.8,7.8 0 0 1 239.78,432.08 Z" fill="#0000ff" stroke="#0000ff" stroke-width="0.3"/><path d="M245.3,437.6 L239.78,432.08 A7.8,7.8 0 0 1 243.28,430.07 Z" fill="#0080ff" stroke="#0080ff" stroke-width="0.3"/>
<circle cx="245.3" cy="437.6" r="2.5" fill="#fff" fill-opacity="0.35"/><circle cx="245.3" cy="437.6" r="7.8" fill="none" stroke="#606060" stroke-opacity="0.5" stroke-width="0.6"/>
<g stroke="#e0e0e0" stroke-width="1"><path d="M259,431.5 H277 M259,435 H277 M259,441.5 H277 M259,445 H277 M262,429 V447 M265,429 V447 M270,429 V447 M273.5,429 V447"/></g>
<path d="M260,433 C263,433 265.5,436 267.3,438.3 C269.5,441 271.5,444 275.5,444.3" stroke="#f03030" stroke-width="1.5" fill="none"/>
<path d="M258.5,438.3 H277 M267.3,429.3 V447" stroke="#101010" stroke-width="1.2"/>
<circle cx="267.3" cy="438.3" r="2" fill="#5a60b0"/>
<text x="283.6" y="445" font-size="18.5" font-family="Liberation Serif, serif" font-weight="bold" fill="#181818">&#931;</text>
<path d="M304,445.7 C307,442.5 310,439.3 312.3,439.5 C315,439.8 315.5,444.3 318.5,444.3" stroke="#7078b8" stroke-width="1.5" fill="none"/>
<path d="M320.3,432 V443.5 M312.5,436.7 H320.3 M318.8,432 H321.8 M318.8,443.5 H321.8" stroke="#404040" stroke-width="1" fill="none"/>
<line x1="339.4" y1="429" x2="339.4" y2="444" stroke="#dcdcdc"/><line x1="342.9" y1="429" x2="342.9" y2="444" stroke="#dcdcdc"/><line x1="346.4" y1="429" x2="346.4" y2="444" stroke="#dcdcdc"/><line x1="349.9" y1="429" x2="349.9" y2="444" stroke="#dcdcdc"/><line x1="353.4" y1="429" x2="353.4" y2="444" stroke="#dcdcdc"/><line x1="336.4" y1="431" x2="353.9" y2="431" stroke="#dcdcdc"/><line x1="336.4" y1="434.3" x2="353.9" y2="434.3" stroke="#dcdcdc"/><line x1="336.4" y1="437.6" x2="353.9" y2="437.6" stroke="#dcdcdc"/><line x1="336.4" y1="441" x2="353.9" y2="441" stroke="#dcdcdc"/><path d="M338.4,429 V447 M336.4,444.5 H353.9" stroke="#7078b0" stroke-width="1.3" fill="none"/><line x1="336.4" y1="431" x2="338.4" y2="431" stroke="#7078b0" stroke-width="1.2"/><line x1="336.4" y1="434.3" x2="338.4" y2="434.3" stroke="#7078b0" stroke-width="1.2"/><line x1="336.4" y1="437.6" x2="338.4" y2="437.6" stroke="#7078b0" stroke-width="1.2"/><line x1="336.4" y1="441" x2="338.4" y2="441" stroke="#7078b0" stroke-width="1.2"/><line x1="342.9" y1="444.5" x2="342.9" y2="446.5" stroke="#7078b0" stroke-width="1.2"/><line x1="346.4" y1="444.5" x2="346.4" y2="446.5" stroke="#7078b0" stroke-width="1.2"/><line x1="349.9" y1="444.5" x2="349.9" y2="446.5" stroke="#7078b0" stroke-width="1.2"/><line x1="353.4" y1="444.5" x2="353.4" y2="446.5" stroke="#7078b0" stroke-width="1.2"/>
<line x1="360.6" y1="429" x2="360.6" y2="444" stroke="#dcdcdc"/><line x1="364.1" y1="429" x2="364.1" y2="444" stroke="#dcdcdc"/><line x1="367.6" y1="429" x2="367.6" y2="444" stroke="#dcdcdc"/><line x1="371.1" y1="429" x2="371.1" y2="444" stroke="#dcdcdc"/><line x1="374.6" y1="429" x2="374.6" y2="444" stroke="#dcdcdc"/><line x1="357.6" y1="431" x2="375.1" y2="431" stroke="#dcdcdc"/><line x1="357.6" y1="434.3" x2="375.1" y2="434.3" stroke="#dcdcdc"/><line x1="357.6" y1="437.6" x2="375.1" y2="437.6" stroke="#dcdcdc"/><line x1="357.6" y1="441" x2="375.1" y2="441" stroke="#dcdcdc"/><path d="M359.6,429 V447 M357.6,444.5 H375.1" stroke="#7078b0" stroke-width="1.3" fill="none"/><line x1="357.6" y1="431" x2="359.6" y2="431" stroke="#7078b0" stroke-width="1.2"/><line x1="357.6" y1="434.3" x2="359.6" y2="434.3" stroke="#7078b0" stroke-width="1.2"/><line x1="357.6" y1="437.6" x2="359.6" y2="437.6" stroke="#7078b0" stroke-width="1.2"/><line x1="357.6" y1="441" x2="359.6" y2="441" stroke="#7078b0" stroke-width="1.2"/><line x1="364.1" y1="444.5" x2="364.1" y2="446.5" stroke="#7078b0" stroke-width="1.2"/><line x1="367.6" y1="444.5" x2="367.6" y2="446.5" stroke="#7078b0" stroke-width="1.2"/><line x1="371.1" y1="444.5" x2="371.1" y2="446.5" stroke="#7078b0" stroke-width="1.2"/><line x1="374.6" y1="444.5" x2="374.6" y2="446.5" stroke="#7078b0" stroke-width="1.2"/>
<rect x="368" y="429.2" width="8.3" height="7.6" fill="#f4f4f4" stroke="#606060" stroke-width="0.9"/><rect x="369.3" y="430.5" width="1.8" height="1.8" fill="#f03030"/><rect x="369.3" y="433.6" width="1.8" height="1.8" fill="#3050f0"/><path d="M372,431.5 h3 M372,434.5 h3" stroke="#808080" stroke-width="0.8"/>
<path d="M383.8,429.2 H393.5 L397.2,432.9 V446.6 H383.8 Z" fill="url(#docg)" stroke="#b0b0b0" stroke-width="0.8"/>
<rect x="385.3" y="431.3" width="8" height="2.6" fill="none" stroke="#e03030" stroke-width="1"/><rect x="385.3" y="442" width="10.3" height="2.6" fill="none" stroke="#e03030" stroke-width="1"/>
<ellipse cx="412.5" cy="436.4" rx="8.3" ry="5.8" fill="#a8a8a8" stroke="#909090" stroke-width="0.6"/><path d="M409,441 L408.5,445 L413,441.5 Z" fill="#a8a8a8"/>
<path d="M408,434.5 h4 M413.5,434.5 h2 M407,436.5 h4.5 M412.5,436.5 h1 M414.5,436.5 h2 M409,438.5 h6" stroke="#505050" stroke-width="0.8"/>
<polygon points="442.90,437.60 442.83,438.68 440.98,439.31 440.70,440.13 440.32,440.90 441.18,442.65 440.47,443.47 439.65,444.18 437.90,443.32 437.13,443.70 436.31,443.98 435.68,445.83 434.60,445.90 433.52,445.83 432.89,443.98 432.07,443.70 431.30,443.32 429.55,444.18 428.73,443.47 428.02,442.65 428.88,440.90 428.50,440.13 428.22,439.31 426.37,438.68 426.30,437.60 426.37,436.52 428.22,435.89 428.50,435.07 428.88,434.30 428.02,432.55 428.73,431.73 429.55,431.02 431.30,431.88 432.07,431.50 432.89,431.22 433.52,429.37 434.60,429.30 435.68,429.37 436.31,431.22 437.13,431.50 437.90,431.88 439.65,431.02 440.47,431.73 441.18,432.55 440.32,434.30 440.70,435.07 440.98,435.89 442.83,436.52" fill="url(#gearg)" stroke="#c4c4c4" stroke-width="0.7"/><circle cx="434.6" cy="437.6" r="2.2" fill="#f0f0f0" stroke="#c8c8c8" stroke-width="0.6"/>
<circle cx="467.5" cy="437.6" r="8.6" fill="url(#bg)" stroke="#5a5c98" stroke-width="0.5"/><ellipse cx="467.5" cy="433.40000000000003" rx="5.8" ry="3.6" fill="url(#hl)"/><path d="M463,436 h9.5 l-8.5,4.5 M463,438.5 h3" stroke="#e8e8f8" stroke-width="1.2" fill="none" stroke-opacity="0.8"/>
<path d="M480.2,438 L484.7,438 L482.45,440.6 Z" fill="#000"/>
<circle cx="497.9" cy="437.6" r="8.6" fill="url(#bg)" stroke="#5a5c98" stroke-width="0.5"/><ellipse cx="497.9" cy="433.40000000000003" rx="5.8" ry="3.6" fill="url(#hl)"/><path d="M494.2,433.5 h1.8 v8.4 h-1.8 Z M496,437.7 L501.8,433.3 V442.1 Z" fill="#fff"/>
<circle cx="520.3" cy="437.6" r="8.6" fill="url(#bg)" stroke="#5a5c98" stroke-width="0.5"/><ellipse cx="520.3" cy="433.40000000000003" rx="5.8" ry="3.6" fill="url(#hl)"/><path d="M515.8,437.7 L520.3,433.8 V441.6 Z M520.3,437.7 L524.8,433.8 V441.6 Z" fill="#fff"/>
<circle cx="542.6" cy="437.6" r="8.6" fill="url(#bg)" stroke="#5a5c98" stroke-width="0.5"/><ellipse cx="542.6" cy="433.40000000000003" rx="5.8" ry="3.6" fill="url(#hl)"/><path d="M539.5,433.3 L547,437.7 L539.5,442.1 Z" fill="#fff"/>
<circle cx="565" cy="437.6" r="8.6" fill="url(#bg)" stroke="#5a5c98" stroke-width="0.5"/><ellipse cx="565" cy="433.40000000000003" rx="5.8" ry="3.6" fill="url(#hl)"/><path d="M560.5,433.8 L565,437.7 L560.5,441.6 Z M565,433.8 L569.5,437.7 L565,441.6 Z" fill="#fff"/>
<circle cx="587.7" cy="437.6" r="8.6" fill="url(#bg)" stroke="#5a5c98" stroke-width="0.5"/><ellipse cx="587.7" cy="433.40000000000003" rx="5.8" ry="3.6" fill="url(#hl)"/><path d="M583.8,433.3 L589.6,437.7 L583.8,442.1 Z M589.6,433.5 h1.8 v8.4 h-1.8 Z" fill="#fff"/>
<rect x="599" y="431.7" width="136" height="7.2" fill="#c8c8c8"/><rect x="599" y="431.7" width="136" height="1" fill="#b8b8b8"/>
<rect x="599" y="440.9" width="136" height="3.9" fill="#c8c8c8"/>
<rect x="662" y="432.5" width="24" height="6" fill="#f8f8f8"/><path d="M662,438.5 h24 v-6" stroke="#707070" stroke-width="1" fill="none"/><line x1="674" y1="432.5" x2="674" y2="438.5" stroke="#a0a0a0" stroke-width="0.8"/>
<rect x="719" y="441.3" width="15.5" height="2.6" fill="#f4f4f4"/><path d="M719,443.9 h15.5 v-2.6" stroke="#707070" stroke-width="0.8" fill="none"/>
<circle cx="747.4" cy="437.6" r="8.6" fill="url(#bg)" stroke="#5a5c98" stroke-width="0.5"/><ellipse cx="747.4" cy="433.40000000000003" rx="5.8" ry="3.6" fill="url(#hl)"/><polygon points="753.40,437.60 753.35,438.38 751.84,438.79 751.65,439.36 751.38,439.90 752.16,441.25 751.64,441.84 751.05,442.36 749.70,441.58 749.16,441.85 748.59,442.04 748.18,443.55 747.40,443.60 746.62,443.55 746.21,442.04 745.64,441.85 745.10,441.58 743.75,442.36 743.16,441.84 742.64,441.25 743.42,439.90 743.15,439.36 742.96,438.79 741.45,438.38 741.40,437.60 741.45,436.82 742.96,436.41 743.15,435.84 743.42,435.30 742.64,433.95 743.16,433.36 743.75,432.84 745.10,433.62 745.64,433.35 746.21,433.16 746.62,431.65 747.40,431.60 748.18,431.65 748.59,433.16 749.16,433.35 749.70,433.62 751.05,432.84 751.64,433.36 752.16,433.95 751.38,435.30 751.65,435.84 751.84,436.41 753.35,436.82" fill="#fff"/><circle cx="747.4" cy="437.6" r="1.8" fill="#5a5ea8"/>
</svg>
<div style="position:absolute;left:2px;top:456px;width:1000px;height:1px;background:#a8a8a8"></div>
<div style="position:absolute;left:2px;top:457px;width:1000px;height:1px;background:#fff"></div>
<div style="position:absolute;left:4px;top:470px;width:10px;height:10px;box-sizing:border-box;border:1px solid #a0a0a0;background:#fff"></div>
<svg style="position:absolute;left:4px;top:470px" width="10" height="10"><path d="M2,4.5 L4,7 L8.5,2" stroke="#000" stroke-width="1.6" fill="none"/></svg>
<div style="position:absolute;left:19.5px;top:469px;font-size:10.5px;line-height:12px;color:#000">Curve:</div>
<div style="position:absolute;left:58px;top:464px;width:115px;height:20px;box-sizing:border-box;background:#fff;border-top:1.5px solid #383838;border-left:1.5px solid #505050;border-bottom:1px solid #e8e8e8"></div>
<div style="position:absolute;left:61.5px;top:469px;font-size:10.5px;line-height:12px">x</div>
<div style="position:absolute;left:2px;top:488px;width:171px;height:97px;box-sizing:border-box;background:#fff;border-top:1px solid #c0c0c0;border-left:1.5px solid #a8a8a8;border-bottom:1px solid #f8f8f8"></div>
<div style="position:absolute;left:4px;top:505.5px;width:169px;height:14px;background:#3399ff;border-bottom:1px solid #1c4a80;box-sizing:border-box"></div>
<div style="position:absolute;left:4.5px;font-size:10.5px;line-height:12px;top:490.5px;color:#000">mag</div>
<div style="position:absolute;left:4.5px;font-size:10.5px;line-height:12px;top:506px;color:#fff">x</div>
<div style="position:absolute;left:4.5px;font-size:10.5px;line-height:12px;top:521.6px;color:#000">y</div>
<div style="position:absolute;left:4.5px;font-size:10.5px;line-height:12px;top:536.5px;color:#000">z</div>
<div style="position:absolute;left:3px;top:588px;width:38px;height:23px;box-sizing:border-box;background:#f0f0f0;border-top:1px solid #fff;border-left:1px solid #fff;border-right:2px solid #8a8a8a;border-bottom:2px solid #8a8a8a;font-size:10.5px;line-height:20px;text-align:center;color:#000;white-space:nowrap;overflow:hidden;">Cut</div>
<div style="position:absolute;left:41px;top:588px;width:39px;height:23px;box-sizing:border-box;background:#f0f0f0;border-top:1px solid #fff;border-left:1px solid #fff;border-right:2px solid #8a8a8a;border-bottom:2px solid #8a8a8a;font-size:10.5px;line-height:20px;text-align:center;color:#000;white-space:nowrap;overflow:hidden;">Copy</div>
<div style="position:absolute;left:80px;top:588px;width:40px;height:23px;box-sizing:border-box;background:#f0f0f0;border-top:1px solid #fff;border-left:1px solid #fff;border-right:2px solid #8a8a8a;border-bottom:2px solid #8a8a8a;font-size:10.5px;line-height:20px;text-align:center;color:#a0a0a0;white-space:nowrap;overflow:hidden;">Paste</div>
<div style="position:absolute;left:120px;top:588px;width:39px;height:23px;box-sizing:border-box;background:#f0f0f0;border-top:1px solid #fff;border-left:1px solid #fff;border-right:2px solid #8a8a8a;border-bottom:2px solid #8a8a8a;font-size:10.5px;line-height:20px;text-align:center;color:#000;white-space:nowrap;overflow:hidden;">Add</div>
<div style="position:absolute;left:173.5px;top:466px;width:5.5px;height:146px;box-sizing:border-box;border-radius:3px;border:1px solid #d8dde8;background:#f4f4f4"></div>
<svg style="position:absolute;left:172px;top:464px" width="12" height="90"><path d="M2.8,4.5 L6.8,8.5 L2.8,12.5 Z" fill="#202020"/><g fill="#404040"><rect x="4.5" y="70.5" width="1.3" height="1.3"/><rect x="4.5" y="73" width="1.3" height="1.3"/><rect x="4.5" y="75.5" width="1.3" height="1.3"/></g></svg>
<svg style="position:absolute;left:637px;top:464px" width="12" height="30"><path d="M3.2,4 L7.2,8.3 L3.2,12.6 Z" fill="#202020"/><g fill="#404040"><rect x="4.3" y="19.5" width="1.3" height="1.3"/><rect x="4.3" y="22" width="1.3" height="1.3"/><rect x="4.3" y="24.5" width="1.3" height="1.3"/></g></svg>
<div style="position:absolute;left:640px;top:466px;width:5.5px;height:26px;box-sizing:border-box;border-radius:3px;border:1px solid #d8dde8;border-top:none"></div>
<svg style="position:absolute;left:188px;top:470px" width="10" height="10"><circle cx="4.5" cy="4.5" r="4" fill="#fff" stroke="#e4e4e4" stroke-width="1"/><path d="M2.2,7.8 A4,4 0 0 1 7.8,2.2" stroke="#8a8a8a" stroke-width="1.1" fill="none"/></svg>
<svg style="position:absolute;left:188px;top:491px" width="10" height="10"><circle cx="4.5" cy="4.5" r="4" fill="#fff" stroke="#e4e4e4" stroke-width="1"/><path d="M2.2,7.8 A4,4 0 0 1 7.8,2.2" stroke="#8a8a8a" stroke-width="1.1" fill="none"/><circle cx="4.5" cy="4.5" r="1.6" fill="#000"/></svg>
<div style="position:absolute;left:203px;top:469px;font-size:10px;line-height:12px">x =</div>
<div style="position:absolute;left:203px;top:490.5px;font-size:10px;line-height:12px">y =</div>
<div style="position:absolute;box-sizing:border-box;border-top:1px solid #a0a0a0;border-left:1px solid #a0a0a0;font-size:10.3px;line-height:12px;padding:1px 0 0 2px;white-space:nowrap;overflow:hidden;color:#000;left:226px;top:467px;width:414px;height:15px;background:#f0f0f0;letter-spacing:0.4px">c:/Program Files/Altair/13.0/demos/mv_hv_hg/animation/dyna/bumper/d3plot:Time</div>
<div style="position:absolute;box-sizing:border-box;border-top:1px solid #a0a0a0;border-left:1px solid #a0a0a0;font-size:10.3px;line-height:12px;padding:1px 0 0 2px;white-space:nowrap;overflow:hidden;color:#000;left:226px;top:489.5px;width:414px;height:15px;background:#fff">reldisp(p1w3c1.x,0,198,252,251,2968,"x","OXY")</div>
<svg style="position:absolute;left:654.5px;top:470px" width="10" height="10"><circle cx="4.5" cy="4.5" r="4" fill="#fff" stroke="#e4e4e4" stroke-width="1"/><path d="M2.2,7.8 A4,4 0 0 1 7.8,2.2" stroke="#8a8a8a" stroke-width="1.1" fill="none"/></svg>
<svg style="position:absolute;left:654.5px;top:491px" width="10" height="10"><circle cx="4.5" cy="4.5" r="4" fill="#fff" stroke="#e4e4e4" stroke-width="1"/><path d="M2.2,7.8 A4,4 0 0 1 7.8,2.2" stroke="#8a8a8a" stroke-width="1.1" fill="none"/></svg>
<div style="position:absolute;left:669.5px;top:469px;font-size:10px;line-height:12px">u =</div>
<div style="position:absolute;left:669.5px;top:490.5px;font-size:10px;line-height:12px">v =</div>
<div style="position:absolute;box-sizing:border-box;border-top:1px solid #a0a0a0;border-left:1px solid #a0a0a0;font-size:10.3px;line-height:12px;padding:1px 0 0 2px;white-space:nowrap;overflow:hidden;color:#000;left:692px;top:467px;width:248px;height:15px;background:#f0f0f0;letter-spacing:0.4px">c:/Program Files/Altair/13.0/demos/mv_hv_hg/animation/dyna/bumper/d3plot:Time</div>
<div style="position:absolute;box-sizing:border-box;border-top:1px solid #a0a0a0;border-left:1px solid #a0a0a0;font-size:10.3px;line-height:12px;padding:1px 0 0 2px;white-space:nowrap;overflow:hidden;color:#000;left:692px;top:489.5px;width:248px;height:15px;background:#f0f0f0;letter-spacing:0.4px">c:/Program Files/Altair/13.0/demos/mv_hv_hg/animation/dyna/bumper/d3plot:Time</div>
<div style="position:absolute;left:940.5px;top:466.5px;width:61.5px;height:23.5px;box-sizing:border-box;background:#f0f0f0;border-top:1px solid #fff;border-left:1px solid #fff;border-right:2px solid #8a8a8a;border-bottom:2px solid #8a8a8a;font-size:11px;line-height:20.5px;text-align:center;color:#000;white-space:nowrap;overflow:hidden;">Apply</div>
<div style="position:absolute;left:180.5px;top:512px;font-size:10.6px;line-height:12px">Source:</div>
<svg style="position:absolute;left:188.5px;top:533px" width="10" height="10"><circle cx="4.5" cy="4.5" r="4" fill="#fff" stroke="#e4e4e4" stroke-width="1"/><path d="M2.2,7.8 A4,4 0 0 1 7.8,2.2" stroke="#8a8a8a" stroke-width="1.1" fill="none"/></svg>
<svg style="position:absolute;left:188.5px;top:555.5px" width="10" height="10"><circle cx="4.5" cy="4.5" r="4" fill="#fff" stroke="#e4e4e4" stroke-width="1"/><path d="M2.2,7.8 A4,4 0 0 1 7.8,2.2" stroke="#8a8a8a" stroke-width="1.1" fill="none"/><circle cx="4.5" cy="4.5" r="1.6" fill="#000"/></svg>
<svg style="position:absolute;left:188.5px;top:577.5px" width="10" height="10"><circle cx="4.5" cy="4.5" r="4" fill="#fff" stroke="#e4e4e4" stroke-width="1"/><path d="M2.2,7.8 A4,4 0 0 1 7.8,2.2" stroke="#8a8a8a" stroke-width="1.1" fill="none"/></svg>
<div style="position:absolute;left:204px;top:532px;font-size:10.6px;line-height:12px">File</div>
<div style="position:absolute;left:204px;top:554.5px;font-size:10.6px;line-height:12px">Math</div>
<div style="position:absolute;left:204px;top:577px;font-size:10.6px;line-height:12px">Values</div>
<div style="position:absolute;left:251px;top:514px;width:1px;height:92px;background:#a0a0a0"></div>
<div style="position:absolute;left:252px;top:514px;width:1px;height:92px;background:#fff"></div>
<div style="position:absolute;left:262px;top:514px;width:30px;height:20px;box-sizing:border-box;background:#f0f0f0;border-top:1px solid #fff;border-left:1px solid #fff;border-right:2px solid #8a8a8a;border-bottom:2px solid #8a8a8a;font-size:10.5px;line-height:17px;text-align:center;color:#000;white-space:nowrap;overflow:hidden;">7</div>
<div style="position:absolute;left:292px;top:514px;width:29px;height:20px;box-sizing:border-box;background:#f0f0f0;border-top:1px solid #fff;border-left:1px solid #fff;border-right:2px solid #8a8a8a;border-bottom:2px solid #8a8a8a;font-size:10.5px;line-height:17px;text-align:center;color:#000;white-space:nowrap;overflow:hidden;">8</div>
<div style="position:absolute;left:321px;top:514px;width:30px;height:20px;box-sizing:border-box;background:#f0f0f0;border-top:1px solid #fff;border-left:1px solid #fff;border-right:2px solid #8a8a8a;border-bottom:2px solid #8a8a8a;font-size:10.5px;line-height:17px;text-align:center;color:#000;white-space:nowrap;overflow:hidden;">9</div>
<div style="position:absolute;left:351px;top:514px;width:29px;height:20px;box-sizing:border-box;background:#f0f0f0;border-top:1px solid #fff;border-left:1px solid #fff;border-right:2px solid #8a8a8a;border-bottom:2px solid #8a8a8a;font-size:10.5px;line-height:17px;text-align:center;color:#000;white-space:nowrap;overflow:hidden;">+</div>
<div style="position:absolute;left:262px;top:534px;width:30px;height:21px;box-sizing:border-box;background:#f0f0f0;border-top:1px solid #fff;border-left:1px solid #fff;border-right:2px solid #8a8a8a;border-bottom:2px solid #8a8a8a;font-size:10.5px;line-height:18px;text-align:center;color:#000;white-space:nowrap;overflow:hidden;">4</div>
<div style="position:absolute;left:292px;top:534px;width:29px;height:21px;box-sizing:border-box;background:#f0f0f0;border-top:1px solid #fff;border-left:1px solid #fff;border-right:2px solid #8a8a8a;border-bottom:2px solid #8a8a8a;font-size:10.5px;line-height:18px;text-align:center;color:#000;white-space:nowrap;overflow:hidden;">5</div>
<div style="position:absolute;left:321px;top:534px;width:30px;height:21px;box-sizing:border-box;background:#f0f0f0;border-top:1px solid #fff;border-left:1px solid #fff;border-right:2px solid #8a8a8a;border-bottom:2px solid #8a8a8a;font-size:10.5px;line-height:18px;text-align:center;color:#000;white-space:nowrap;overflow:hidden;">6</div>
<div style="position:absolute;left:351px;top:534px;width:29px;height:21px;box-sizing:border-box;background:#f0f0f0;border-top:1px solid #fff;border-left:1px solid #fff;border-right:2px solid #8a8a8a;border-bottom:2px solid #8a8a8a;font-size:10.5px;line-height:18px;text-align:center;color:#000;white-space:nowrap;overflow:hidden;">&#8722;</div>
<div style="position:absolute;left:262px;top:555px;width:30px;height:21px;box-sizing:border-box;background:#f0f0f0;border-top:1px solid #fff;border-left:1px solid #fff;border-right:2px solid #8a8a8a;border-bottom:2px solid #8a8a8a;font-size:10.5px;line-height:18px;text-align:center;color:#000;white-space:nowrap;overflow:hidden;">1</div>
<div style="position:absolute;left:292px;top:555px;width:29px;height:21px;box-sizing:border-box;background:#f0f0f0;border-top:1px solid #fff;border-left:1px solid #fff;border-right:2px solid #8a8a8a;border-bottom:2px solid #8a8a8a;font-size:10.5px;line-height:18px;text-align:center;color:#000;white-space:nowrap;overflow:hidden;">2</div>
<div style="position:absolute;left:321px;top:555px;width:30px;height:21px;box-sizing:border-box;background:#f0f0f0;border-top:1px solid #fff;border-left:1px solid #fff;border-right:2px solid #8a8a8a;border-bottom:2px solid #8a8a8a;font-size:10.5px;line-height:18px;text-align:center;color:#000;white-space:nowrap;overflow:hidden;">3</div>
<div style="position:absolute;left:351px;top:555px;width:29px;height:21px;box-sizing:border-box;background:#f0f0f0;border-top:1px solid #fff;border-left:1px solid #fff;border-right:2px solid #8a8a8a;border-bottom:2px solid #8a8a8a;font-size:10.5px;line-height:18px;text-align:center;color:#000;white-space:nowrap;overflow:hidden;">&#8727;</div>
<div style="position:absolute;left:262px;top:576px;width:30px;height:20px;box-sizing:border-box;background:#f0f0f0;border-top:1px solid #fff;border-left:1px solid #fff;border-right:2px solid #8a8a8a;border-bottom:2px solid #8a8a8a;font-size:10.5px;line-height:17px;text-align:center;color:#000;white-space:nowrap;overflow:hidden;">&#8592;</div>
<div style="position:absolute;left:292px;top:576px;width:29px;height:20px;box-sizing:border-box;background:#f0f0f0;border-top:1px solid #fff;border-left:1px solid #fff;border-right:2px solid #8a8a8a;border-bottom:2px solid #8a8a8a;font-size:10.5px;line-height:17px;text-align:center;color:#000;white-space:nowrap;overflow:hidden;">0</div>
<div style="position:absolute;left:321px;top:576px;width:30px;height:20px;box-sizing:border-box;background:#f0f0f0;border-top:1px solid #fff;border-left:1px solid #fff;border-right:2px solid #8a8a8a;border-bottom:2px solid #8a8a8a;font-size:10.5px;line-height:17px;text-align:center;color:#000;white-space:nowrap;overflow:hidden;">&#8226;</div>
<div style="position:absolute;left:351px;top:576px;width:29px;height:20px;box-sizing:border-box;background:#f0f0f0;border-top:1px solid #fff;border-left:1px solid #fff;border-right:2px solid #8a8a8a;border-bottom:2px solid #8a8a8a;font-size:10.5px;line-height:17px;text-align:center;color:#000;white-space:nowrap;overflow:hidden;">&#8725;</div>
<div style="position:absolute;left:385.5px;top:514px;width:59.5px;height:20px;box-sizing:border-box;background:#f0f0f0;border-top:1px solid #fff;border-left:1px solid #fff;border-right:2px solid #8a8a8a;border-bottom:2px solid #8a8a8a;font-size:10.8px;line-height:17px;text-align:center;color:#000;white-space:nowrap;overflow:hidden;">Range</div>
<div style="position:absolute;left:385.5px;top:534px;width:29.0px;height:21px;box-sizing:border-box;background:#f0f0f0;border-top:1px solid #fff;border-left:1px solid #fff;border-right:2px solid #8a8a8a;border-bottom:2px solid #8a8a8a;font-size:10.5px;line-height:18px;text-align:center;color:#000;white-space:nowrap;overflow:hidden;">x</div>
<div style="position:absolute;left:414.5px;top:534px;width:30.5px;height:21px;box-sizing:border-box;background:#f0f0f0;border-top:1px solid #fff;border-left:1px solid #fff;border-right:2px solid #8a8a8a;border-bottom:2px solid #8a8a8a;font-size:10.5px;line-height:18px;text-align:center;color:#000;white-space:nowrap;overflow:hidden;">y</div>
<div style="position:absolute;left:385.5px;top:555px;width:29.0px;height:21px;box-sizing:border-box;background:#f0f0f0;border-top:1px solid #fff;border-left:1px solid #fff;border-right:2px solid #8a8a8a;border-bottom:2px solid #8a8a8a;font-size:10.5px;line-height:18px;text-align:center;color:#000;white-space:nowrap;overflow:hidden;">(</div>
<div style="position:absolute;left:414.5px;top:555px;width:30.5px;height:21px;box-sizing:border-box;background:#f0f0f0;border-top:1px solid #fff;border-left:1px solid #fff;border-right:2px solid #8a8a8a;border-bottom:2px solid #8a8a8a;font-size:10.5px;line-height:18px;text-align:center;color:#000;white-space:nowrap;overflow:hidden;">)</div>
<div style="position:absolute;left:385.5px;top:576px;width:29.0px;height:20px;box-sizing:border-box;background:#f0f0f0;border-top:1px solid #fff;border-left:1px solid #fff;border-right:2px solid #8a8a8a;border-bottom:2px solid #8a8a8a;font-size:10.5px;line-height:17px;text-align:center;color:#000;white-space:nowrap;overflow:hidden;">&#8730;</div>
<div style="position:absolute;left:414.5px;top:576px;width:30.5px;height:20px;box-sizing:border-box;background:#f0f0f0;border-top:1px solid #fff;border-left:1px solid #fff;border-right:2px solid #8a8a8a;border-bottom:2px solid #8a8a8a;font-size:10.5px;line-height:17px;text-align:center;color:#000;white-space:nowrap;overflow:hidden;">^</div>
<div style="position:absolute;left:450px;top:514px;width:29.5px;height:20px;box-sizing:border-box;background:#f0f0f0;border-top:1px solid #fff;border-left:1px solid #fff;border-right:2px solid #8a8a8a;border-bottom:2px solid #8a8a8a;font-size:10.5px;line-height:17px;text-align:center;color:#000;white-space:nowrap;overflow:hidden;">sin</div>
<div style="position:absolute;left:479.5px;top:514px;width:29.5px;height:20px;box-sizing:border-box;background:#f0f0f0;border-top:1px solid #fff;border-left:1px solid #fff;border-right:2px solid #8a8a8a;border-bottom:2px solid #8a8a8a;font-size:10.5px;line-height:17px;text-align:center;color:#000;white-space:nowrap;overflow:hidden;">ln</div>
<div style="position:absolute;left:450px;top:534px;width:29.5px;height:21px;box-sizing:border-box;background:#f0f0f0;border-top:1px solid #fff;border-left:1px solid #fff;border-right:2px solid #8a8a8a;border-bottom:2px solid #8a8a8a;font-size:10.5px;line-height:18px;text-align:center;color:#000;white-space:nowrap;overflow:hidden;">cos</div>
<div style="position:absolute;left:479.5px;top:534px;width:29.5px;height:21px;box-sizing:border-box;background:#f0f0f0;border-top:1px solid #fff;border-left:1px solid #fff;border-right:2px solid #8a8a8a;border-bottom:2px solid #8a8a8a;font-size:10.5px;line-height:18px;text-align:center;color:#000;white-space:nowrap;overflow:hidden;">exp</div>
<div style="position:absolute;left:450px;top:555px;width:29.5px;height:21px;box-sizing:border-box;background:#f0f0f0;border-top:1px solid #fff;border-left:1px solid #fff;border-right:2px solid #8a8a8a;border-bottom:2px solid #8a8a8a;font-size:10.5px;line-height:18px;text-align:center;color:#000;white-space:nowrap;overflow:hidden;">tan</div>
<div style="position:absolute;left:479.5px;top:555px;width:29.5px;height:21px;box-sizing:border-box;background:#f0f0f0;border-top:1px solid #fff;border-left:1px solid #fff;border-right:2px solid #8a8a8a;border-bottom:2px solid #8a8a8a;font-size:10.5px;line-height:18px;text-align:center;color:#000;white-space:nowrap;overflow:hidden;">log</div>
<div style="position:absolute;left:450px;top:576px;width:29.5px;height:20px;box-sizing:border-box;background:#f0f0f0;border-top:1px solid #fff;border-left:1px solid #fff;border-right:2px solid #8a8a8a;border-bottom:2px solid #8a8a8a;font-size:10.5px;line-height:17px;text-align:center;color:#000;white-space:nowrap;overflow:hidden;">&#960;</div>
<div style="position:absolute;left:479.5px;top:576px;width:29.5px;height:20px;box-sizing:border-box;background:#f0f0f0;border-top:1px solid #fff;border-left:1px solid #fff;border-right:2px solid #8a8a8a;border-bottom:2px solid #8a8a8a;font-size:10.5px;line-height:17px;text-align:center;color:#000;white-space:nowrap;overflow:hidden;">alog</div>
<div style="position:absolute;left:514px;top:514px;width:29px;height:20px;box-sizing:border-box;background:#f0f0f0;border-top:1px solid #fff;border-left:1px solid #fff;border-right:2px solid #8a8a8a;border-bottom:2px solid #8a8a8a;font-size:10.5px;line-height:17px;text-align:center;color:#000;white-space:nowrap;overflow:hidden;"></div>
<div style="position:absolute;left:514px;top:534px;width:29px;height:21px;box-sizing:border-box;background:#f0f0f0;border-top:1px solid #fff;border-left:1px solid #fff;border-right:2px solid #8a8a8a;border-bottom:2px solid #8a8a8a;font-size:10.5px;line-height:18px;text-align:center;color:#000;white-space:nowrap;overflow:hidden;"></div>
<svg style="position:absolute;left:512px;top:512px" width="34" height="46"><path d="M14.5,6.5 C13,5.5 11.5,6.5 11.5,9 L11.5,14.5 C11.5,17 10,17.5 8.8,16.2" stroke="#000" stroke-width="1.7" fill="none"/><path d="M17.2,6.2 L19.6,9 M19.6,6.2 L17.2,9" stroke="#202020" stroke-width="0.9"/><rect x="15" y="14.2" width="2.2" height="2.8" rx="0.8" fill="#404040"/><text x="7" y="31" font-size="7" font-weight="bold" fill="#000">&#8706;</text><line x1="9" y1="36.5" x2="18" y2="26" stroke="#000" stroke-width="0.9"/><text x="10.5" y="39" font-size="7.5" font-weight="bold" fill="#000">&#8706;x</text></svg>
<div style="position:absolute;left:548.5px;top:514px;width:59.0px;height:20px;box-sizing:border-box;background:#f0f0f0;border-top:1px solid #fff;border-left:1px solid #fff;border-right:2px solid #8a8a8a;border-bottom:2px solid #8a8a8a;font-size:11px;line-height:17px;text-align:center;color:#000;white-space:nowrap;overflow:hidden;padding-right:3px;">Freq</div>
<div style="position:absolute;left:607.5px;top:514px;width:60.0px;height:20px;box-sizing:border-box;background:#f0f0f0;border-top:1px solid #fff;border-left:1px solid #fff;border-right:2px solid #8a8a8a;border-bottom:2px solid #8a8a8a;font-size:11px;line-height:17px;text-align:center;color:#000;white-space:nowrap;overflow:hidden;padding-right:3px;">PSD</div>
<div style="position:absolute;left:548.5px;top:534px;width:59.0px;height:21px;box-sizing:border-box;background:#f0f0f0;border-top:1px solid #fff;border-left:1px solid #fff;border-right:2px solid #8a8a8a;border-bottom:2px solid #8a8a8a;font-size:9.6px;line-height:18px;text-align:center;color:#000;white-space:nowrap;overflow:hidden;padding-right:10px;">|FFT|</div>
<div style="position:absolute;left:607.5px;top:534px;width:60.0px;height:21px;box-sizing:border-box;background:#f0f0f0;border-top:1px solid #fff;border-left:1px solid #fff;border-right:2px solid #8a8a8a;border-bottom:2px solid #8a8a8a;font-size:9.6px;line-height:18px;text-align:center;color:#000;white-space:nowrap;overflow:hidden;padding-right:10px;">|FRF|</div>
<div style="position:absolute;left:548.5px;top:555px;width:59.0px;height:21px;box-sizing:border-box;background:#f0f0f0;border-top:1px solid #fff;border-left:1px solid #fff;border-right:2px solid #8a8a8a;border-bottom:2px solid #8a8a8a;font-size:9.6px;line-height:18px;text-align:center;color:#000;white-space:nowrap;overflow:hidden;padding-right:10px;">FFT &#216;</div>
<div style="position:absolute;left:607.5px;top:555px;width:60.0px;height:21px;box-sizing:border-box;background:#f0f0f0;border-top:1px solid #fff;border-left:1px solid #fff;border-right:2px solid #8a8a8a;border-bottom:2px solid #8a8a8a;font-size:9.6px;line-height:18px;text-align:center;color:#000;white-space:nowrap;overflow:hidden;padding-right:10px;">FRF &#216;</div>
<div style="position:absolute;left:548.5px;top:576px;width:59.0px;height:20px;box-sizing:border-box;background:#f0f0f0;border-top:1px solid #fff;border-left:1px solid #fff;border-right:2px solid #8a8a8a;border-bottom:2px solid #8a8a8a;font-size:10.5px;line-height:17px;text-align:center;color:#000;white-space:nowrap;overflow:hidden;padding-right:3px;">Window...</div>
<div style="position:absolute;left:607.5px;top:576px;width:60.0px;height:20px;box-sizing:border-box;background:#f0f0f0;border-top:1px solid #fff;border-left:1px solid #fff;border-right:2px solid #8a8a8a;border-bottom:2px solid #8a8a8a;font-size:10.5px;line-height:17px;text-align:center;color:#000;white-space:nowrap;overflow:hidden;padding-right:3px;">Hilbert</div>
<div style="position:absolute;left:674px;top:514px;width:60px;height:20px;box-sizing:border-box;background:#f0f0f0;border-top:1px solid #fff;border-left:1px solid #fff;border-right:2px solid #8a8a8a;border-bottom:2px solid #8a8a8a;font-size:10.5px;line-height:17px;text-align:center;color:#000;white-space:nowrap;overflow:hidden;">Filter...</div>
<div style="position:absolute;left:734px;top:514px;width:60px;height:20px;box-sizing:border-box;background:#f0f0f0;border-top:1px solid #fff;border-left:1px solid #fff;border-right:2px solid #8a8a8a;border-bottom:2px solid #8a8a8a;font-size:10.5px;line-height:17px;text-align:center;color:#000;white-space:nowrap;overflow:hidden;">Curves...</div>
<div style="position:absolute;left:674px;top:534px;width:60px;height:21px;box-sizing:border-box;background:#f0f0f0;border-top:1px solid #fff;border-left:1px solid #fff;border-right:2px solid #8a8a8a;border-bottom:2px solid #8a8a8a;font-size:10.5px;line-height:18px;text-align:center;color:#000;white-space:nowrap;overflow:hidden;">Fit...</div>
<div style="position:absolute;left:734px;top:534px;width:60px;height:21px;box-sizing:border-box;background:#f0f0f0;border-top:1px solid #fff;border-left:1px solid #fff;border-right:2px solid #8a8a8a;border-bottom:2px solid #8a8a8a;font-size:10.5px;line-height:18px;text-align:center;color:#000;white-space:nowrap;overflow:hidden;">Functions...</div>
<div style="position:absolute;left:675.5px;top:580px;width:10px;height:10px;box-sizing:border-box;border:1px solid #a0a0a0;background:#fff"></div>
<div style="position:absolute;left:690.5px;top:578.5px;font-size:10.6px;line-height:12px">Freeze</div>
</body></html>
